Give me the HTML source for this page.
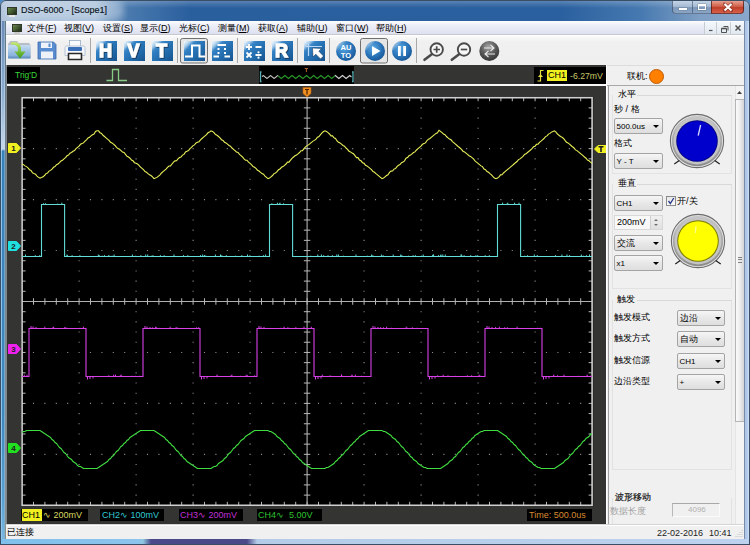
<!DOCTYPE html>
<html><head><meta charset="utf-8">
<style>
*{margin:0;padding:0;box-sizing:border-box}
html,body{width:750px;height:545px;overflow:hidden}
body{position:relative;font-family:"Liberation Sans",sans-serif;font-size:9px;color:#000;background:#4a8ac8}
.abs{position:absolute}
.t{position:absolute;white-space:nowrap;line-height:1}
u{text-decoration-thickness:1px;text-underline-offset:1px}
.combo{position:absolute;border:1px solid #a4a4a4;border-radius:2px;background:linear-gradient(#f6f6f6,#e8e8e8 50%,#dedede);}
.combo .arr{position:absolute;right:3px;top:50%;margin-top:-1.5px;width:0;height:0;border-left:3px solid transparent;border-right:3px solid transparent;border-top:3.5px solid #000}
.combo .v{position:absolute;left:1.5px;top:3px;white-space:nowrap;line-height:1}
.ibtn{position:absolute;border-radius:2px;background:linear-gradient(135deg,#7fb8e8 0%,#2c6fb0 45%,#1b5a98 100%)}
.ibtn b{position:absolute;left:0;right:0;top:1px;text-align:center;color:#fff;font:bold 17px/19px "Liberation Sans",sans-serif;text-shadow:1px 1px 1px #0a2a50}
.sep{position:absolute;top:38px;width:1px;height:25px;background:#a8a8a8}
.cbox{position:absolute;top:509px;height:12px;background:#000}
</style></head>
<body>
<!-- window frame / title bar -->
<div class="abs" style="left:0;top:0;width:750px;height:21px;background:linear-gradient(90deg,#b0c4da 0px,#a4bcd6 95px,#4a7aae 128px,#2a5f9e 190px,#2a609f 560px,#4679b0 640px,#7f9fc4 700px,#8aa8cc 750px);border-radius:6px 6px 0 0"></div>
<div class="abs" style="left:0;top:0;width:750px;height:8px;background:linear-gradient(rgba(255,255,255,.25),rgba(255,255,255,0));border-radius:6px 6px 0 0"></div>
<div class="abs" style="left:0;top:0;width:750px;height:545px;border:1px solid #3a4f66;border-radius:6px 6px 0 0;pointer-events:none;z-index:50"></div>
<!-- left frame -->
<div class="abs" style="left:0px;top:21px;width:1px;height:524px;background:linear-gradient(#2a3c52,#24506e 150px,#24506e)"></div>
<div class="abs" style="left:1px;top:21px;width:1px;height:524px;background:linear-gradient(#a8c0dc,#c0d8f0 128px,#d0e8f8 129px,#8cc4e8 130px,#90c8ec)"></div>
<div class="abs" style="left:2px;top:21px;width:2px;height:518px;background:linear-gradient(#6a8ab8,#8aaed0 70px,#c8d8ea 128px,#3a80b8 130px,#4088c0 400px,#5aa0d4 480px,#7ab8e0 518px)"></div>
<div class="abs" style="left:4px;top:21px;width:1px;height:518px;background:linear-gradient(#8aa4c0,#b0c8e0 70px,#c8d8ea 128px,#6aa0c8 130px,#80b0d0)"></div>
<div class="abs" style="left:5px;top:21px;width:1px;height:518px;background:linear-gradient(#607888,#8a9090)"></div>
<div class="abs" style="left:744px;top:21px;width:1px;height:518px;background:#7a8aa8"></div>
<div class="abs" style="left:745px;top:21px;width:4px;height:518px;background:linear-gradient(90deg,#aac4e6,#b4ccec 60%,#d0e4f8)"></div>
<div class="abs" style="left:749px;top:21px;width:1px;height:524px;background:#304060"></div>
<div class="abs" style="left:1px;top:539px;width:748px;height:5px;background:linear-gradient(90deg,#7fc0ec,#8cc4ec 138px,#90c8e0 142px,#4a4a8a 150px,#4a4a88 246px,#b4cce8 256px,#bcd2ee 750px)"></div><div class="abs" style="left:0;top:544px;width:750px;height:1px;background:#304060"></div>
<!-- title icon and text -->
<div class="abs" style="left:4px;top:2px;width:120px;height:17px;border-radius:8px;background:rgba(225,235,245,.35);filter:blur(3px)"></div>
<div class="abs" style="left:7px;top:7px;width:10px;height:8px;background:linear-gradient(135deg,#6a8a4a,#1e2a18);border:1px solid #30382a"></div>
<div class="abs" style="left:9px;top:15px;width:6px;height:2px;background:#e8e8e8"></div>
<div class="t" style="left:21px;top:6px;font-size:9px;color:#0c1420;-webkit-text-stroke:.15px #0c1420">DSO-6000 - [Scope1]</div>
<!-- caption buttons -->
<div class="abs" style="left:672px;top:1px;width:40px;height:13px;border:1px solid rgba(40,60,90,.6);border-top:none;border-radius:0 0 0 4px;background:linear-gradient(#c4d4e6,#a2b8d2 50%,#7d97b8 55%,#8aa6c6)"></div>
<div class="abs" style="left:692px;top:1px;width:1px;height:12px;background:rgba(40,60,90,.5)"></div>
<div class="abs" style="left:679px;top:8px;width:8px;height:2px;background:#fff;box-shadow:0 0 1px #333"></div>
<div class="abs" style="left:698px;top:4px;width:8px;height:6px;border:1px solid #fff;border-top-width:2px;box-shadow:0 0 1px #333"></div>
<div class="abs" style="left:711px;top:1px;width:33px;height:13px;border:1px solid rgba(70,20,20,.7);border-top:none;border-radius:0 0 4px 0;background:linear-gradient(#e8a090,#d0604a 45%,#c0402a 55%,#d8604a)"></div>
<svg class="abs" style="left:711px;top:0" width="34" height="15"><path d="M13.5 4L20.5 10.5M20.5 4L13.5 10.5" stroke="#5a1810" stroke-width="3.2" stroke-linecap="round" opacity=".5"/><path d="M13.5 4L20.5 10.5M20.5 4L13.5 10.5" stroke="#fff" stroke-width="2.1"/></svg>
<!-- menu bar -->
<div class="abs" style="left:6px;top:21px;width:738px;height:14px;background:linear-gradient(#fdfdff 0,#eef0f8 30%,#dde0f0 100%);border-bottom:1px solid #c6c8cc"></div>
<div class="abs" style="left:12px;top:24px;width:10px;height:8px;background:linear-gradient(135deg,#6a8a4a,#1e2a18);border:1px solid #30382a"></div>
<div class="abs" style="left:14px;top:32px;width:6px;height:2px;background:#c8c8c8"></div>
<div class="t" style="left:27px;top:24px">文件(<u>F</u>)</div>
<div class="t" style="left:64px;top:24px">视图(<u>V</u>)</div>
<div class="t" style="left:103px;top:24px">设置(<u>S</u>)</div>
<div class="t" style="left:140px;top:24px">显示(<u>D</u>)</div>
<div class="t" style="left:179px;top:24px">光标(<u>C</u>)</div>
<div class="t" style="left:218px;top:24px">测量(<u>M</u>)</div>
<div class="t" style="left:258px;top:24px">获取(<u>A</u>)</div>
<div class="t" style="left:297px;top:24px">辅助(<u>U</u>)</div>
<div class="t" style="left:336px;top:24px">窗口(<u>W</u>)</div>
<div class="t" style="left:376px;top:24px">帮助(<u>H</u>)</div>
<!-- MDI buttons -->
<div class="abs" style="left:704px;top:22px;width:12px;height:12px;background:linear-gradient(#f4f8fc,#e0e8f0);border-left:1px solid #c8ccd0"></div>
<div class="abs" style="left:716px;top:22px;width:14px;height:12px;background:linear-gradient(#f4f8fc,#e0e8f0);border-left:1px solid #c8ccd0"></div>
<div class="abs" style="left:730px;top:22px;width:14px;height:12px;background:linear-gradient(#f4f8fc,#e0e8f0);border-left:1px solid #c8ccd0"></div>
<svg class="abs" style="left:704px;top:22px" width="40" height="13"><path d="M5 8.5H8.5" stroke="#505050" stroke-width="1.2"/><path d="M17.5 6.5h5v4h-5z" fill="none" stroke="#505050" stroke-width="1"/><path d="M17.5 6.5h5" stroke="#505050" stroke-width="1.6"/><path d="M19.5 4.5h4.5v4" fill="none" stroke="#505050" stroke-width="1"/><path d="M31.5 3.5L36.5 8.5M36.5 3.5L31.5 8.5" stroke="#505050" stroke-width="1.5"/></svg>
<!-- toolbar -->
<div class="abs" style="left:6px;top:35px;width:738px;height:30px;background:linear-gradient(#fafafa,#f0f0f0 20%,#efefef);border-top:1px solid #fff"></div>
<div class="sep" style="left:90px"></div><div class="sep" style="left:177px"></div><div class="sep" style="left:237px"></div><div class="sep" style="left:297px"></div><div class="sep" style="left:329px"></div><div class="sep" style="left:416px"></div><svg class="abs" style="left:0;top:0;z-index:2" width="520" height="66" viewBox="0 0 520 66">
<defs>
<linearGradient id="gb" x1="0" y1="0" x2="1" y2="1"><stop offset="0" stop-color="#6aaee6"/><stop offset=".35" stop-color="#2f7dc0"/><stop offset=".7" stop-color="#2068a8"/><stop offset="1" stop-color="#16538e"/></linearGradient>
<linearGradient id="gh" x1="0" y1="0" x2=".6" y2=".6"><stop offset="0" stop-color="#fff" stop-opacity=".95"/><stop offset=".28" stop-color="#fff" stop-opacity=".5"/><stop offset=".45" stop-color="#fff" stop-opacity="0"/></linearGradient>
<radialGradient id="gc" cx=".4" cy=".35" r=".7"><stop offset="0" stop-color="#5aa8e4"/><stop offset=".6" stop-color="#2a74b8"/><stop offset="1" stop-color="#165494"/></radialGradient>
<linearGradient id="gch" x1="0" y1="0" x2=".7" y2=".7"><stop offset="0" stop-color="#fff" stop-opacity=".9"/><stop offset=".3" stop-color="#fff" stop-opacity=".3"/><stop offset=".42" stop-color="#fff" stop-opacity="0"/></linearGradient>
<linearGradient id="gf" x1="0" y1="0" x2="0" y2="1"><stop offset="0" stop-color="#c4dcf2"/><stop offset="1" stop-color="#78a6d6"/></linearGradient>
<linearGradient id="ga" x1="0" y1="0" x2="0" y2="1"><stop offset="0" stop-color="#c8ec70"/><stop offset="1" stop-color="#3a9a18"/></linearGradient>
<radialGradient id="gs" cx=".45" cy=".3" r=".75"><stop offset="0" stop-color="#a8a8a8"/><stop offset=".5" stop-color="#5a5a5a"/><stop offset="1" stop-color="#303030"/></radialGradient>
<filter id="sh" x="-20%" y="-20%" width="150%" height="150%"><feDropShadow dx="0.8" dy="0.8" stdDeviation="0.6" flood-color="#082040" flood-opacity=".9"/></filter>
</defs>
<path d="M8 44L10.5 41H17L18.5 43H29L30.5 45V58H8Z" fill="#b8bcc4"/>
<rect x="8" y="45" width="22.5" height="13.5" rx="1" fill="url(#gf)"/>
<rect x="8" y="56.5" width="22.5" height="2" fill="#5a86b8" opacity=".6"/>
<path d="M11 42.5C16.5 41.5 20.5 43 21 48V51.5H25.5L20 58.5L14.5 51.5H18V48.5C18 46 15 44.5 11 44.5Z" fill="url(#ga)"/>
<path d="M38 42H53.5L56 44.5V59H38Z" fill="#5a8cd0"/>
<path d="M38 42H53.5L56 44.5V59H38Z" fill="none" stroke="#3a6aaa" stroke-width=".8"/>
<rect x="41" y="42.5" width="11" height="5.5" fill="#f0f4fa"/>
<rect x="48.5" y="43.5" width="2" height="3.5" fill="#5a8cd0"/>
<rect x="41" y="51.5" width="12" height="7" fill="#eef2f8"/>
<rect x="69.5" y="40.5" width="11" height="6" fill="#f8fafc" stroke="#9aaec4" stroke-width=".8"/>
<path d="M65 47.5C65 46.5 66 46 67 46H83C84 46 85 46.5 85 47.5V55.5H65Z" fill="#f4f6fa" stroke="#a8b8cc" stroke-width=".8"/>
<rect x="68" y="47" width="14" height="4" rx="1" fill="#3a70b8"/>
<path d="M68 53H82V60H68Z" fill="#fafafa"/>
<path d="M68 53.5H82M68.5 53V59.5H81.5V53" fill="none" stroke="#282828" stroke-width="1.6"/>
<rect x="96" y="41" width="21" height="20" fill="url(#gb)"/><rect x="96" y="41" width="21" height="20" fill="url(#gh)"/><text x="105.5" y="57" text-anchor="middle" font-family="Liberation Sans" font-weight="bold" font-size="18" fill="#fff" stroke="#fff" stroke-width="1.3" filter="url(#sh)">H</text>
<rect x="124" y="41" width="21" height="20" fill="url(#gb)"/><rect x="124" y="41" width="21" height="20" fill="url(#gh)"/><text x="133.5" y="57" text-anchor="middle" font-family="Liberation Sans" font-weight="bold" font-size="18" fill="#fff" stroke="#fff" stroke-width="1.3" filter="url(#sh)">V</text>
<rect x="152" y="41" width="21" height="20" fill="url(#gb)"/><rect x="152" y="41" width="21" height="20" fill="url(#gh)"/><text x="161.5" y="57" text-anchor="middle" font-family="Liberation Sans" font-weight="bold" font-size="18" fill="#fff" stroke="#fff" stroke-width="1.3" filter="url(#sh)">T</text>
<rect x="272" y="41" width="21" height="20" fill="url(#gb)"/><rect x="272" y="41" width="21" height="20" fill="url(#gh)"/><text x="281.5" y="57" text-anchor="middle" font-family="Liberation Sans" font-weight="bold" font-size="18" fill="#fff" stroke="#fff" stroke-width="1.3" filter="url(#sh)">R</text>
<rect x="184" y="41" width="21" height="20" fill="url(#gb)"/><rect x="184" y="41" width="21" height="20" fill="url(#gh)"/><path d="M185 56.5H192V45.5H199.5V56.5H205" fill="none" stroke="#fff" stroke-width="2" filter="url(#sh)"/>
<rect x="212" y="41" width="21" height="20" fill="url(#gb)"/><rect x="212" y="41" width="21" height="20" fill="url(#gh)"/><path d="M213.5 56.5H219M217.5 45H226M224.5 56.5H230" fill="none" stroke="#fff" stroke-width="2"/><path d="M218.5 48V55M225 48V55" fill="none" stroke="#fff" stroke-width="2" stroke-dasharray="2 2"/>
<rect x="244" y="41" width="21" height="20" fill="url(#gb)"/><rect x="244" y="41" width="21" height="20" fill="url(#gh)"/><path d="M246 47H252M249 44V50M255.5 47H261.5M246.5 52.5L251.5 57.5M251.5 52.5L246.5 57.5M255.5 55H261.5" fill="none" stroke="#fff" stroke-width="1.8"/><circle cx="258.5" cy="52.3" r="1.1" fill="#fff"/><circle cx="258.5" cy="57.7" r="1.1" fill="#fff"/>
<rect x="304" y="41" width="21" height="20" fill="url(#gb)"/><rect x="304" y="41" width="21" height="20" fill="url(#gh)"/><path d="M308.5 43.5V56M306 46.5H322" fill="none" stroke="#bcd8f4" stroke-width="1.2"/><path d="M312.5 48L321.5 48.5L318.8 51.2L323.5 56L320.5 59L315.8 54.2L313 57Z" fill="#fff" stroke="#0a2a50" stroke-width=".5"/>
<circle cx="346" cy="51" r="10" fill="url(#gc)"/><circle cx="346" cy="51" r="10" fill="url(#gch)"/><text x="346" y="49.5" text-anchor="middle" font-family="Liberation Sans" font-weight="bold" font-size="7.5" fill="#fff">AU</text><text x="346" y="57.5" text-anchor="middle" font-family="Liberation Sans" font-weight="bold" font-size="7.5" fill="#fff">TO</text>
<rect x="360.5" y="38.5" width="27" height="24.5" rx="2" fill="#e6e6e6" stroke="#707070" stroke-width="1"/>
<rect x="180.5" y="38.5" width="27" height="24.5" rx="2" fill="#e6e6e6" stroke="#707070" stroke-width="1"/>
<rect x="184" y="41" width="21" height="20" fill="url(#gb)"/><rect x="184" y="41" width="21" height="20" fill="url(#gh)"/><path d="M185 56.5H192V45.5H199.5V56.5H205" fill="none" stroke="#fff" stroke-width="2"/>
<circle cx="375" cy="51" r="10" fill="url(#gc)"/><circle cx="375" cy="51" r="10" fill="url(#gch)"/><path d="M372 46L380.5 51L372 56Z" fill="#fff"/>
<circle cx="402" cy="51" r="10" fill="url(#gc)"/><circle cx="402" cy="51" r="10" fill="url(#gch)"/><rect x="398" y="46" width="2.8" height="10" fill="#fff"/><rect x="403.2" y="46" width="2.8" height="10" fill="#fff"/>
<circle cx="436.7" cy="49.5" r="6.2" fill="#f6f6f6" stroke="#4a4a4a" stroke-width="1.9"/>
<path d="M431.8 54.2L424.5 59.8" stroke="#4a4a4a" stroke-width="2.6" stroke-linecap="round"/>
<path d="M433.5 49.5H440M436.7 46.3V52.7" stroke="#4a4a4a" stroke-width="1.7"/>
<circle cx="464" cy="49.5" r="6.2" fill="#f6f6f6" stroke="#4a4a4a" stroke-width="1.9"/>
<path d="M459.1 54.2L451.8 59.8" stroke="#4a4a4a" stroke-width="2.6" stroke-linecap="round"/>
<path d="M460.8 49.5H467.2" stroke="#4a4a4a" stroke-width="1.7"/>
<circle cx="489.3" cy="51" r="10" fill="url(#gs)"/>
<path d="M484 48H493.5M490.5 45L494 48L490.5 51M495 54H485.5M488.5 51L485 54L488.5 57" fill="none" stroke="#e8e8e8" stroke-width="1.1"/>
</svg>
<!-- scope area -->
<div class="abs" style="left:6px;top:65px;width:600px;height:459px;background:#343432"></div>
<div class="abs" style="left:7px;top:84px;width:599px;height:2px;background:#f6f6f6"></div>
<div class="abs" style="left:6px;top:65px;width:1px;height:459px;background:#80868c"></div>
<div class="abs" style="left:7px;top:67px;width:33px;height:16px;background:#000"></div>
<div class="t" style="left:15px;top:71px;color:#38d838;font-size:8.5px">Trig'D</div>
<svg class="abs" style="left:100px;top:64px" width="40" height="22"><path d="M6.5 16.5H12.5V5.5H18.5V16.5H27" fill="none" stroke="#88cc88" stroke-width="1.3"/></svg>
<div class="abs" style="left:259px;top:66px;width:95px;height:18px;background:#000"></div>
<svg class="abs" style="left:258px;top:64px" width="100" height="22"><path d="M4.00 12.58 L4.30 12.33 L4.60 12.08 L4.90 11.83 L5.20 11.58 L5.50 11.67 L5.80 11.92 L6.10 12.17 L6.40 12.42 L6.70 12.67 L7.00 12.92 L7.30 13.17 L7.60 13.42 L7.90 13.67 L8.20 13.92 L8.50 14.17 L8.80 14.42 L9.10 14.33 L9.40 14.08 L9.70 13.83 L10.00 13.58 L10.30 13.33 L10.60 13.08 L10.90 12.83 L11.20 12.58 L11.50 12.33 L11.80 12.08 L12.10 11.83 L12.40 11.58 L12.70 11.67 L13.00 11.92 L13.30 12.17 L13.60 12.42 L13.90 12.67 L14.20 12.92 L14.50 13.17 L14.80 13.42 L15.10 13.67 L15.40 13.92 L15.70 14.17 L16.00 14.42 L16.30 14.33 L16.60 14.08 L16.90 13.83 L17.20 13.58 L17.50 13.33 L17.80 13.08 L18.10 12.83 L18.40 12.58 L18.70 12.33 L19.00 12.08 L19.30 11.83 L19.60 11.58 L19.90 11.67" fill="none" stroke="#d0d0d0" stroke-width="1.1"/><path d="M20.00 11.75 L20.30 12.00 L20.60 12.25 L20.90 12.50 L21.20 12.75 L21.50 13.00 L21.80 13.25 L22.10 13.50 L22.40 13.75 L22.70 14.00 L23.00 14.25 L23.30 14.50 L23.60 14.25 L23.90 14.00 L24.20 13.75 L24.50 13.50 L24.80 13.25 L25.10 13.00 L25.40 12.75 L25.70 12.50 L26.00 12.25 L26.30 12.00 L26.60 11.75 L26.90 11.50 L27.20 11.75 L27.50 12.00 L27.80 12.25 L28.10 12.50 L28.40 12.75 L28.70 13.00 L29.00 13.25 L29.30 13.50 L29.60 13.75 L29.90 14.00 L30.20 14.25 L30.50 14.50 L30.80 14.25 L31.10 14.00 L31.40 13.75 L31.70 13.50 L32.00 13.25 L32.30 13.00 L32.60 12.75 L32.90 12.50 L33.20 12.25 L33.50 12.00 L33.80 11.75 L34.10 11.50 L34.40 11.75 L34.70 12.00 L35.00 12.25 L35.30 12.50 L35.60 12.75 L35.90 13.00 L36.20 13.25 L36.50 13.50 L36.80 13.75 L37.10 14.00 L37.40 14.25 L37.70 14.50 L38.00 14.25 L38.30 14.00 L38.60 13.75 L38.90 13.50 L39.20 13.25 L39.50 13.00 L39.80 12.75 L40.10 12.50 L40.40 12.25 L40.70 12.00 L41.00 11.75 L41.30 11.50 L41.60 11.75 L41.90 12.00 L42.20 12.25 L42.50 12.50 L42.80 12.75 L43.10 13.00 L43.40 13.25 L43.70 13.50 L44.00 13.75 L44.30 14.00 L44.60 14.25 L44.90 14.50 L45.20 14.25 L45.50 14.00 L45.80 13.75 L46.10 13.50 L46.40 13.25 L46.70 13.00 L47.00 12.75 L47.30 12.50 L47.60 12.25 L47.90 12.00 L48.20 11.75 L48.50 11.50 L48.80 11.75 L49.10 12.00 L49.40 12.25 L49.70 12.50 L50.00 12.75 L50.30 13.00 L50.60 13.25 L50.90 13.50 L51.20 13.75 L51.50 14.00 L51.80 14.25 L52.10 14.50 L52.40 14.25 L52.70 14.00 L53.00 13.75 L53.30 13.50 L53.60 13.25 L53.90 13.00 L54.20 12.75 L54.50 12.50 L54.80 12.25 L55.10 12.00 L55.40 11.75 L55.70 11.50 L56.00 11.75 L56.30 12.00 L56.60 12.25 L56.90 12.50 L57.20 12.75 L57.50 13.00 L57.80 13.25 L58.10 13.50 L58.40 13.75 L58.70 14.00 L59.00 14.25 L59.30 14.50 L59.60 14.25 L59.90 14.00 L60.20 13.75 L60.50 13.50 L60.80 13.25 L61.10 13.00 L61.40 12.75 L61.70 12.50 L62.00 12.25 L62.30 12.00 L62.60 11.75 L62.90 11.50 L63.20 11.75 L63.50 12.00 L63.80 12.25 L64.10 12.50 L64.40 12.75 L64.70 13.00 L65.00 13.25 L65.30 13.50 L65.60 13.75 L65.90 14.00 L66.20 14.25 L66.50 14.50 L66.80 14.25 L67.10 14.00 L67.40 13.75 L67.70 13.50 L68.00 13.25 L68.30 13.00 L68.60 12.75 L68.90 12.50 L69.20 12.25 L69.50 12.00 L69.80 11.75 L70.10 11.50 L70.40 11.75 L70.70 12.00 L71.00 12.25 L71.30 12.50 L71.60 12.75 L71.90 13.00 L72.20 13.25 L72.50 13.50 L72.80 13.75 L73.10 14.00 L73.40 14.25 L73.70 14.50 L74.00 14.25 L74.30 14.00 L74.60 13.75 L74.90 13.50 L75.20 13.25 L75.50 13.00 L75.80 12.75 L76.10 12.50 L76.40 12.25 L76.70 12.00 L77.00 11.75" fill="none" stroke="#2a962a" stroke-width="1.1"/><path d="M77.00 11.75 L77.30 11.50 L77.60 11.75 L77.90 12.00 L78.20 12.25 L78.50 12.50 L78.80 12.75 L79.10 13.00 L79.40 13.25 L79.70 13.50 L80.00 13.75 L80.30 14.00 L80.60 14.25 L80.90 14.50 L81.20 14.25 L81.50 14.00 L81.80 13.75 L82.10 13.50 L82.40 13.25 L82.70 13.00 L83.00 12.75 L83.30 12.50 L83.60 12.25 L83.90 12.00 L84.20 11.75 L84.50 11.50 L84.80 11.75 L85.10 12.00 L85.40 12.25 L85.70 12.50 L86.00 12.75 L86.30 13.00 L86.60 13.25 L86.90 13.50 L87.20 13.75 L87.50 14.00 L87.80 14.25 L88.10 14.50 L88.40 14.25 L88.70 14.00 L89.00 13.75 L89.30 13.50 L89.60 13.25 L89.90 13.00 L90.20 12.75 L90.50 12.50 L90.80 12.25 L91.10 12.00 L91.40 11.75 L91.70 11.50 L92.00 11.75 L92.30 12.00 L92.60 12.25 L92.90 12.50 L93.20 12.75 L93.50 13.00" fill="none" stroke="#d0d0d0" stroke-width="1.1"/><path d="M3.5 8H2.5V17.5H3.5M94 8H95V17.5H94" fill="none" stroke="#58b0b4" stroke-width="1.3"/><path d="M46.8 4.5H50M48.4 4.5V8" stroke="#b06830" stroke-width="1"/></svg>
<div class="abs" style="left:534px;top:67px;width:72px;height:17px;background:#000"></div>
<svg class="abs" style="left:534px;top:64px" width="12" height="22"><path d="M3.5 17H6.5V6.5H9.5" fill="none" stroke="#e8e040" stroke-width="1.2"/><path d="M4 13L6.5 10L9 13Z" fill="#e8e040"/></svg>
<div class="abs" style="left:547px;top:70px;width:20px;height:11px;background:#f0f020"></div>
<div class="t" style="left:548px;top:71px;font-size:9px;color:#000">CH1</div>
<div class="t" style="left:570px;top:71.5px;font-size:8.7px;color:#c8c868">-6.27mV</div>
<svg class="abs" style="left:0;top:0" width="750" height="545" viewBox="0 0 750 545">
<rect x="21.2" y="96.8" width="572" height="409.5" fill="#000"/>
<path d="M78.55 107.34h1.1v1.1h-1.1zM78.55 117.53h1.1v1.1h-1.1zM78.55 127.72h1.1v1.1h-1.1zM78.55 137.91h1.1v1.1h-1.1zM78.55 148.10h1.1v1.1h-1.1zM78.55 158.29h1.1v1.1h-1.1zM78.55 168.48h1.1v1.1h-1.1zM78.55 178.67h1.1v1.1h-1.1zM78.55 188.86h1.1v1.1h-1.1zM78.55 199.05h1.1v1.1h-1.1zM78.55 209.24h1.1v1.1h-1.1zM78.55 219.43h1.1v1.1h-1.1zM78.55 229.62h1.1v1.1h-1.1zM78.55 239.81h1.1v1.1h-1.1zM78.55 250.00h1.1v1.1h-1.1zM78.55 260.19h1.1v1.1h-1.1zM78.55 270.38h1.1v1.1h-1.1zM78.55 280.57h1.1v1.1h-1.1zM78.55 290.76h1.1v1.1h-1.1zM78.55 300.95h1.1v1.1h-1.1zM78.55 311.14h1.1v1.1h-1.1zM78.55 321.33h1.1v1.1h-1.1zM78.55 331.52h1.1v1.1h-1.1zM78.55 341.71h1.1v1.1h-1.1zM78.55 351.90h1.1v1.1h-1.1zM78.55 362.09h1.1v1.1h-1.1zM78.55 372.28h1.1v1.1h-1.1zM78.55 382.47h1.1v1.1h-1.1zM78.55 392.66h1.1v1.1h-1.1zM78.55 402.85h1.1v1.1h-1.1zM78.55 413.04h1.1v1.1h-1.1zM78.55 423.23h1.1v1.1h-1.1zM78.55 433.42h1.1v1.1h-1.1zM78.55 443.61h1.1v1.1h-1.1zM78.55 453.80h1.1v1.1h-1.1zM78.55 463.99h1.1v1.1h-1.1zM78.55 474.18h1.1v1.1h-1.1zM78.55 484.37h1.1v1.1h-1.1zM78.55 494.56h1.1v1.1h-1.1zM135.55 107.34h1.1v1.1h-1.1zM135.55 117.53h1.1v1.1h-1.1zM135.55 127.72h1.1v1.1h-1.1zM135.55 137.91h1.1v1.1h-1.1zM135.55 148.10h1.1v1.1h-1.1zM135.55 158.29h1.1v1.1h-1.1zM135.55 168.48h1.1v1.1h-1.1zM135.55 178.67h1.1v1.1h-1.1zM135.55 188.86h1.1v1.1h-1.1zM135.55 199.05h1.1v1.1h-1.1zM135.55 209.24h1.1v1.1h-1.1zM135.55 219.43h1.1v1.1h-1.1zM135.55 229.62h1.1v1.1h-1.1zM135.55 239.81h1.1v1.1h-1.1zM135.55 250.00h1.1v1.1h-1.1zM135.55 260.19h1.1v1.1h-1.1zM135.55 270.38h1.1v1.1h-1.1zM135.55 280.57h1.1v1.1h-1.1zM135.55 290.76h1.1v1.1h-1.1zM135.55 300.95h1.1v1.1h-1.1zM135.55 311.14h1.1v1.1h-1.1zM135.55 321.33h1.1v1.1h-1.1zM135.55 331.52h1.1v1.1h-1.1zM135.55 341.71h1.1v1.1h-1.1zM135.55 351.90h1.1v1.1h-1.1zM135.55 362.09h1.1v1.1h-1.1zM135.55 372.28h1.1v1.1h-1.1zM135.55 382.47h1.1v1.1h-1.1zM135.55 392.66h1.1v1.1h-1.1zM135.55 402.85h1.1v1.1h-1.1zM135.55 413.04h1.1v1.1h-1.1zM135.55 423.23h1.1v1.1h-1.1zM135.55 433.42h1.1v1.1h-1.1zM135.55 443.61h1.1v1.1h-1.1zM135.55 453.80h1.1v1.1h-1.1zM135.55 463.99h1.1v1.1h-1.1zM135.55 474.18h1.1v1.1h-1.1zM135.55 484.37h1.1v1.1h-1.1zM135.55 494.56h1.1v1.1h-1.1zM192.55 107.34h1.1v1.1h-1.1zM192.55 117.53h1.1v1.1h-1.1zM192.55 127.72h1.1v1.1h-1.1zM192.55 137.91h1.1v1.1h-1.1zM192.55 148.10h1.1v1.1h-1.1zM192.55 158.29h1.1v1.1h-1.1zM192.55 168.48h1.1v1.1h-1.1zM192.55 178.67h1.1v1.1h-1.1zM192.55 188.86h1.1v1.1h-1.1zM192.55 199.05h1.1v1.1h-1.1zM192.55 209.24h1.1v1.1h-1.1zM192.55 219.43h1.1v1.1h-1.1zM192.55 229.62h1.1v1.1h-1.1zM192.55 239.81h1.1v1.1h-1.1zM192.55 250.00h1.1v1.1h-1.1zM192.55 260.19h1.1v1.1h-1.1zM192.55 270.38h1.1v1.1h-1.1zM192.55 280.57h1.1v1.1h-1.1zM192.55 290.76h1.1v1.1h-1.1zM192.55 300.95h1.1v1.1h-1.1zM192.55 311.14h1.1v1.1h-1.1zM192.55 321.33h1.1v1.1h-1.1zM192.55 331.52h1.1v1.1h-1.1zM192.55 341.71h1.1v1.1h-1.1zM192.55 351.90h1.1v1.1h-1.1zM192.55 362.09h1.1v1.1h-1.1zM192.55 372.28h1.1v1.1h-1.1zM192.55 382.47h1.1v1.1h-1.1zM192.55 392.66h1.1v1.1h-1.1zM192.55 402.85h1.1v1.1h-1.1zM192.55 413.04h1.1v1.1h-1.1zM192.55 423.23h1.1v1.1h-1.1zM192.55 433.42h1.1v1.1h-1.1zM192.55 443.61h1.1v1.1h-1.1zM192.55 453.80h1.1v1.1h-1.1zM192.55 463.99h1.1v1.1h-1.1zM192.55 474.18h1.1v1.1h-1.1zM192.55 484.37h1.1v1.1h-1.1zM192.55 494.56h1.1v1.1h-1.1zM249.55 107.34h1.1v1.1h-1.1zM249.55 117.53h1.1v1.1h-1.1zM249.55 127.72h1.1v1.1h-1.1zM249.55 137.91h1.1v1.1h-1.1zM249.55 148.10h1.1v1.1h-1.1zM249.55 158.29h1.1v1.1h-1.1zM249.55 168.48h1.1v1.1h-1.1zM249.55 178.67h1.1v1.1h-1.1zM249.55 188.86h1.1v1.1h-1.1zM249.55 199.05h1.1v1.1h-1.1zM249.55 209.24h1.1v1.1h-1.1zM249.55 219.43h1.1v1.1h-1.1zM249.55 229.62h1.1v1.1h-1.1zM249.55 239.81h1.1v1.1h-1.1zM249.55 250.00h1.1v1.1h-1.1zM249.55 260.19h1.1v1.1h-1.1zM249.55 270.38h1.1v1.1h-1.1zM249.55 280.57h1.1v1.1h-1.1zM249.55 290.76h1.1v1.1h-1.1zM249.55 300.95h1.1v1.1h-1.1zM249.55 311.14h1.1v1.1h-1.1zM249.55 321.33h1.1v1.1h-1.1zM249.55 331.52h1.1v1.1h-1.1zM249.55 341.71h1.1v1.1h-1.1zM249.55 351.90h1.1v1.1h-1.1zM249.55 362.09h1.1v1.1h-1.1zM249.55 372.28h1.1v1.1h-1.1zM249.55 382.47h1.1v1.1h-1.1zM249.55 392.66h1.1v1.1h-1.1zM249.55 402.85h1.1v1.1h-1.1zM249.55 413.04h1.1v1.1h-1.1zM249.55 423.23h1.1v1.1h-1.1zM249.55 433.42h1.1v1.1h-1.1zM249.55 443.61h1.1v1.1h-1.1zM249.55 453.80h1.1v1.1h-1.1zM249.55 463.99h1.1v1.1h-1.1zM249.55 474.18h1.1v1.1h-1.1zM249.55 484.37h1.1v1.1h-1.1zM249.55 494.56h1.1v1.1h-1.1zM363.55 107.34h1.1v1.1h-1.1zM363.55 117.53h1.1v1.1h-1.1zM363.55 127.72h1.1v1.1h-1.1zM363.55 137.91h1.1v1.1h-1.1zM363.55 148.10h1.1v1.1h-1.1zM363.55 158.29h1.1v1.1h-1.1zM363.55 168.48h1.1v1.1h-1.1zM363.55 178.67h1.1v1.1h-1.1zM363.55 188.86h1.1v1.1h-1.1zM363.55 199.05h1.1v1.1h-1.1zM363.55 209.24h1.1v1.1h-1.1zM363.55 219.43h1.1v1.1h-1.1zM363.55 229.62h1.1v1.1h-1.1zM363.55 239.81h1.1v1.1h-1.1zM363.55 250.00h1.1v1.1h-1.1zM363.55 260.19h1.1v1.1h-1.1zM363.55 270.38h1.1v1.1h-1.1zM363.55 280.57h1.1v1.1h-1.1zM363.55 290.76h1.1v1.1h-1.1zM363.55 300.95h1.1v1.1h-1.1zM363.55 311.14h1.1v1.1h-1.1zM363.55 321.33h1.1v1.1h-1.1zM363.55 331.52h1.1v1.1h-1.1zM363.55 341.71h1.1v1.1h-1.1zM363.55 351.90h1.1v1.1h-1.1zM363.55 362.09h1.1v1.1h-1.1zM363.55 372.28h1.1v1.1h-1.1zM363.55 382.47h1.1v1.1h-1.1zM363.55 392.66h1.1v1.1h-1.1zM363.55 402.85h1.1v1.1h-1.1zM363.55 413.04h1.1v1.1h-1.1zM363.55 423.23h1.1v1.1h-1.1zM363.55 433.42h1.1v1.1h-1.1zM363.55 443.61h1.1v1.1h-1.1zM363.55 453.80h1.1v1.1h-1.1zM363.55 463.99h1.1v1.1h-1.1zM363.55 474.18h1.1v1.1h-1.1zM363.55 484.37h1.1v1.1h-1.1zM363.55 494.56h1.1v1.1h-1.1zM420.55 107.34h1.1v1.1h-1.1zM420.55 117.53h1.1v1.1h-1.1zM420.55 127.72h1.1v1.1h-1.1zM420.55 137.91h1.1v1.1h-1.1zM420.55 148.10h1.1v1.1h-1.1zM420.55 158.29h1.1v1.1h-1.1zM420.55 168.48h1.1v1.1h-1.1zM420.55 178.67h1.1v1.1h-1.1zM420.55 188.86h1.1v1.1h-1.1zM420.55 199.05h1.1v1.1h-1.1zM420.55 209.24h1.1v1.1h-1.1zM420.55 219.43h1.1v1.1h-1.1zM420.55 229.62h1.1v1.1h-1.1zM420.55 239.81h1.1v1.1h-1.1zM420.55 250.00h1.1v1.1h-1.1zM420.55 260.19h1.1v1.1h-1.1zM420.55 270.38h1.1v1.1h-1.1zM420.55 280.57h1.1v1.1h-1.1zM420.55 290.76h1.1v1.1h-1.1zM420.55 300.95h1.1v1.1h-1.1zM420.55 311.14h1.1v1.1h-1.1zM420.55 321.33h1.1v1.1h-1.1zM420.55 331.52h1.1v1.1h-1.1zM420.55 341.71h1.1v1.1h-1.1zM420.55 351.90h1.1v1.1h-1.1zM420.55 362.09h1.1v1.1h-1.1zM420.55 372.28h1.1v1.1h-1.1zM420.55 382.47h1.1v1.1h-1.1zM420.55 392.66h1.1v1.1h-1.1zM420.55 402.85h1.1v1.1h-1.1zM420.55 413.04h1.1v1.1h-1.1zM420.55 423.23h1.1v1.1h-1.1zM420.55 433.42h1.1v1.1h-1.1zM420.55 443.61h1.1v1.1h-1.1zM420.55 453.80h1.1v1.1h-1.1zM420.55 463.99h1.1v1.1h-1.1zM420.55 474.18h1.1v1.1h-1.1zM420.55 484.37h1.1v1.1h-1.1zM420.55 494.56h1.1v1.1h-1.1zM477.55 107.34h1.1v1.1h-1.1zM477.55 117.53h1.1v1.1h-1.1zM477.55 127.72h1.1v1.1h-1.1zM477.55 137.91h1.1v1.1h-1.1zM477.55 148.10h1.1v1.1h-1.1zM477.55 158.29h1.1v1.1h-1.1zM477.55 168.48h1.1v1.1h-1.1zM477.55 178.67h1.1v1.1h-1.1zM477.55 188.86h1.1v1.1h-1.1zM477.55 199.05h1.1v1.1h-1.1zM477.55 209.24h1.1v1.1h-1.1zM477.55 219.43h1.1v1.1h-1.1zM477.55 229.62h1.1v1.1h-1.1zM477.55 239.81h1.1v1.1h-1.1zM477.55 250.00h1.1v1.1h-1.1zM477.55 260.19h1.1v1.1h-1.1zM477.55 270.38h1.1v1.1h-1.1zM477.55 280.57h1.1v1.1h-1.1zM477.55 290.76h1.1v1.1h-1.1zM477.55 300.95h1.1v1.1h-1.1zM477.55 311.14h1.1v1.1h-1.1zM477.55 321.33h1.1v1.1h-1.1zM477.55 331.52h1.1v1.1h-1.1zM477.55 341.71h1.1v1.1h-1.1zM477.55 351.90h1.1v1.1h-1.1zM477.55 362.09h1.1v1.1h-1.1zM477.55 372.28h1.1v1.1h-1.1zM477.55 382.47h1.1v1.1h-1.1zM477.55 392.66h1.1v1.1h-1.1zM477.55 402.85h1.1v1.1h-1.1zM477.55 413.04h1.1v1.1h-1.1zM477.55 423.23h1.1v1.1h-1.1zM477.55 433.42h1.1v1.1h-1.1zM477.55 443.61h1.1v1.1h-1.1zM477.55 453.80h1.1v1.1h-1.1zM477.55 463.99h1.1v1.1h-1.1zM477.55 474.18h1.1v1.1h-1.1zM477.55 484.37h1.1v1.1h-1.1zM477.55 494.56h1.1v1.1h-1.1zM534.55 107.34h1.1v1.1h-1.1zM534.55 117.53h1.1v1.1h-1.1zM534.55 127.72h1.1v1.1h-1.1zM534.55 137.91h1.1v1.1h-1.1zM534.55 148.10h1.1v1.1h-1.1zM534.55 158.29h1.1v1.1h-1.1zM534.55 168.48h1.1v1.1h-1.1zM534.55 178.67h1.1v1.1h-1.1zM534.55 188.86h1.1v1.1h-1.1zM534.55 199.05h1.1v1.1h-1.1zM534.55 209.24h1.1v1.1h-1.1zM534.55 219.43h1.1v1.1h-1.1zM534.55 229.62h1.1v1.1h-1.1zM534.55 239.81h1.1v1.1h-1.1zM534.55 250.00h1.1v1.1h-1.1zM534.55 260.19h1.1v1.1h-1.1zM534.55 270.38h1.1v1.1h-1.1zM534.55 280.57h1.1v1.1h-1.1zM534.55 290.76h1.1v1.1h-1.1zM534.55 300.95h1.1v1.1h-1.1zM534.55 311.14h1.1v1.1h-1.1zM534.55 321.33h1.1v1.1h-1.1zM534.55 331.52h1.1v1.1h-1.1zM534.55 341.71h1.1v1.1h-1.1zM534.55 351.90h1.1v1.1h-1.1zM534.55 362.09h1.1v1.1h-1.1zM534.55 372.28h1.1v1.1h-1.1zM534.55 382.47h1.1v1.1h-1.1zM534.55 392.66h1.1v1.1h-1.1zM534.55 402.85h1.1v1.1h-1.1zM534.55 413.04h1.1v1.1h-1.1zM534.55 423.23h1.1v1.1h-1.1zM534.55 433.42h1.1v1.1h-1.1zM534.55 443.61h1.1v1.1h-1.1zM534.55 453.80h1.1v1.1h-1.1zM534.55 463.99h1.1v1.1h-1.1zM534.55 474.18h1.1v1.1h-1.1zM534.55 484.37h1.1v1.1h-1.1zM534.55 494.56h1.1v1.1h-1.1zM32.95 148.10h1.1v1.1h-1.1zM44.35 148.10h1.1v1.1h-1.1zM55.75 148.10h1.1v1.1h-1.1zM67.15 148.10h1.1v1.1h-1.1zM78.55 148.10h1.1v1.1h-1.1zM89.95 148.10h1.1v1.1h-1.1zM101.35 148.10h1.1v1.1h-1.1zM112.75 148.10h1.1v1.1h-1.1zM124.15 148.10h1.1v1.1h-1.1zM135.55 148.10h1.1v1.1h-1.1zM146.95 148.10h1.1v1.1h-1.1zM158.35 148.10h1.1v1.1h-1.1zM169.75 148.10h1.1v1.1h-1.1zM181.15 148.10h1.1v1.1h-1.1zM192.55 148.10h1.1v1.1h-1.1zM203.95 148.10h1.1v1.1h-1.1zM215.35 148.10h1.1v1.1h-1.1zM226.75 148.10h1.1v1.1h-1.1zM238.15 148.10h1.1v1.1h-1.1zM249.55 148.10h1.1v1.1h-1.1zM260.95 148.10h1.1v1.1h-1.1zM272.35 148.10h1.1v1.1h-1.1zM283.75 148.10h1.1v1.1h-1.1zM295.15 148.10h1.1v1.1h-1.1zM306.55 148.10h1.1v1.1h-1.1zM317.95 148.10h1.1v1.1h-1.1zM329.35 148.10h1.1v1.1h-1.1zM340.75 148.10h1.1v1.1h-1.1zM352.15 148.10h1.1v1.1h-1.1zM363.55 148.10h1.1v1.1h-1.1zM374.95 148.10h1.1v1.1h-1.1zM386.35 148.10h1.1v1.1h-1.1zM397.75 148.10h1.1v1.1h-1.1zM409.15 148.10h1.1v1.1h-1.1zM420.55 148.10h1.1v1.1h-1.1zM431.95 148.10h1.1v1.1h-1.1zM443.35 148.10h1.1v1.1h-1.1zM454.75 148.10h1.1v1.1h-1.1zM466.15 148.10h1.1v1.1h-1.1zM477.55 148.10h1.1v1.1h-1.1zM488.95 148.10h1.1v1.1h-1.1zM500.35 148.10h1.1v1.1h-1.1zM511.75 148.10h1.1v1.1h-1.1zM523.15 148.10h1.1v1.1h-1.1zM534.55 148.10h1.1v1.1h-1.1zM545.95 148.10h1.1v1.1h-1.1zM557.35 148.10h1.1v1.1h-1.1zM568.75 148.10h1.1v1.1h-1.1zM580.15 148.10h1.1v1.1h-1.1zM32.95 199.05h1.1v1.1h-1.1zM44.35 199.05h1.1v1.1h-1.1zM55.75 199.05h1.1v1.1h-1.1zM67.15 199.05h1.1v1.1h-1.1zM78.55 199.05h1.1v1.1h-1.1zM89.95 199.05h1.1v1.1h-1.1zM101.35 199.05h1.1v1.1h-1.1zM112.75 199.05h1.1v1.1h-1.1zM124.15 199.05h1.1v1.1h-1.1zM135.55 199.05h1.1v1.1h-1.1zM146.95 199.05h1.1v1.1h-1.1zM158.35 199.05h1.1v1.1h-1.1zM169.75 199.05h1.1v1.1h-1.1zM181.15 199.05h1.1v1.1h-1.1zM192.55 199.05h1.1v1.1h-1.1zM203.95 199.05h1.1v1.1h-1.1zM215.35 199.05h1.1v1.1h-1.1zM226.75 199.05h1.1v1.1h-1.1zM238.15 199.05h1.1v1.1h-1.1zM249.55 199.05h1.1v1.1h-1.1zM260.95 199.05h1.1v1.1h-1.1zM272.35 199.05h1.1v1.1h-1.1zM283.75 199.05h1.1v1.1h-1.1zM295.15 199.05h1.1v1.1h-1.1zM306.55 199.05h1.1v1.1h-1.1zM317.95 199.05h1.1v1.1h-1.1zM329.35 199.05h1.1v1.1h-1.1zM340.75 199.05h1.1v1.1h-1.1zM352.15 199.05h1.1v1.1h-1.1zM363.55 199.05h1.1v1.1h-1.1zM374.95 199.05h1.1v1.1h-1.1zM386.35 199.05h1.1v1.1h-1.1zM397.75 199.05h1.1v1.1h-1.1zM409.15 199.05h1.1v1.1h-1.1zM420.55 199.05h1.1v1.1h-1.1zM431.95 199.05h1.1v1.1h-1.1zM443.35 199.05h1.1v1.1h-1.1zM454.75 199.05h1.1v1.1h-1.1zM466.15 199.05h1.1v1.1h-1.1zM477.55 199.05h1.1v1.1h-1.1zM488.95 199.05h1.1v1.1h-1.1zM500.35 199.05h1.1v1.1h-1.1zM511.75 199.05h1.1v1.1h-1.1zM523.15 199.05h1.1v1.1h-1.1zM534.55 199.05h1.1v1.1h-1.1zM545.95 199.05h1.1v1.1h-1.1zM557.35 199.05h1.1v1.1h-1.1zM568.75 199.05h1.1v1.1h-1.1zM580.15 199.05h1.1v1.1h-1.1zM32.95 250.00h1.1v1.1h-1.1zM44.35 250.00h1.1v1.1h-1.1zM55.75 250.00h1.1v1.1h-1.1zM67.15 250.00h1.1v1.1h-1.1zM78.55 250.00h1.1v1.1h-1.1zM89.95 250.00h1.1v1.1h-1.1zM101.35 250.00h1.1v1.1h-1.1zM112.75 250.00h1.1v1.1h-1.1zM124.15 250.00h1.1v1.1h-1.1zM135.55 250.00h1.1v1.1h-1.1zM146.95 250.00h1.1v1.1h-1.1zM158.35 250.00h1.1v1.1h-1.1zM169.75 250.00h1.1v1.1h-1.1zM181.15 250.00h1.1v1.1h-1.1zM192.55 250.00h1.1v1.1h-1.1zM203.95 250.00h1.1v1.1h-1.1zM215.35 250.00h1.1v1.1h-1.1zM226.75 250.00h1.1v1.1h-1.1zM238.15 250.00h1.1v1.1h-1.1zM249.55 250.00h1.1v1.1h-1.1zM260.95 250.00h1.1v1.1h-1.1zM272.35 250.00h1.1v1.1h-1.1zM283.75 250.00h1.1v1.1h-1.1zM295.15 250.00h1.1v1.1h-1.1zM306.55 250.00h1.1v1.1h-1.1zM317.95 250.00h1.1v1.1h-1.1zM329.35 250.00h1.1v1.1h-1.1zM340.75 250.00h1.1v1.1h-1.1zM352.15 250.00h1.1v1.1h-1.1zM363.55 250.00h1.1v1.1h-1.1zM374.95 250.00h1.1v1.1h-1.1zM386.35 250.00h1.1v1.1h-1.1zM397.75 250.00h1.1v1.1h-1.1zM409.15 250.00h1.1v1.1h-1.1zM420.55 250.00h1.1v1.1h-1.1zM431.95 250.00h1.1v1.1h-1.1zM443.35 250.00h1.1v1.1h-1.1zM454.75 250.00h1.1v1.1h-1.1zM466.15 250.00h1.1v1.1h-1.1zM477.55 250.00h1.1v1.1h-1.1zM488.95 250.00h1.1v1.1h-1.1zM500.35 250.00h1.1v1.1h-1.1zM511.75 250.00h1.1v1.1h-1.1zM523.15 250.00h1.1v1.1h-1.1zM534.55 250.00h1.1v1.1h-1.1zM545.95 250.00h1.1v1.1h-1.1zM557.35 250.00h1.1v1.1h-1.1zM568.75 250.00h1.1v1.1h-1.1zM580.15 250.00h1.1v1.1h-1.1zM32.95 351.90h1.1v1.1h-1.1zM44.35 351.90h1.1v1.1h-1.1zM55.75 351.90h1.1v1.1h-1.1zM67.15 351.90h1.1v1.1h-1.1zM78.55 351.90h1.1v1.1h-1.1zM89.95 351.90h1.1v1.1h-1.1zM101.35 351.90h1.1v1.1h-1.1zM112.75 351.90h1.1v1.1h-1.1zM124.15 351.90h1.1v1.1h-1.1zM135.55 351.90h1.1v1.1h-1.1zM146.95 351.90h1.1v1.1h-1.1zM158.35 351.90h1.1v1.1h-1.1zM169.75 351.90h1.1v1.1h-1.1zM181.15 351.90h1.1v1.1h-1.1zM192.55 351.90h1.1v1.1h-1.1zM203.95 351.90h1.1v1.1h-1.1zM215.35 351.90h1.1v1.1h-1.1zM226.75 351.90h1.1v1.1h-1.1zM238.15 351.90h1.1v1.1h-1.1zM249.55 351.90h1.1v1.1h-1.1zM260.95 351.90h1.1v1.1h-1.1zM272.35 351.90h1.1v1.1h-1.1zM283.75 351.90h1.1v1.1h-1.1zM295.15 351.90h1.1v1.1h-1.1zM306.55 351.90h1.1v1.1h-1.1zM317.95 351.90h1.1v1.1h-1.1zM329.35 351.90h1.1v1.1h-1.1zM340.75 351.90h1.1v1.1h-1.1zM352.15 351.90h1.1v1.1h-1.1zM363.55 351.90h1.1v1.1h-1.1zM374.95 351.90h1.1v1.1h-1.1zM386.35 351.90h1.1v1.1h-1.1zM397.75 351.90h1.1v1.1h-1.1zM409.15 351.90h1.1v1.1h-1.1zM420.55 351.90h1.1v1.1h-1.1zM431.95 351.90h1.1v1.1h-1.1zM443.35 351.90h1.1v1.1h-1.1zM454.75 351.90h1.1v1.1h-1.1zM466.15 351.90h1.1v1.1h-1.1zM477.55 351.90h1.1v1.1h-1.1zM488.95 351.90h1.1v1.1h-1.1zM500.35 351.90h1.1v1.1h-1.1zM511.75 351.90h1.1v1.1h-1.1zM523.15 351.90h1.1v1.1h-1.1zM534.55 351.90h1.1v1.1h-1.1zM545.95 351.90h1.1v1.1h-1.1zM557.35 351.90h1.1v1.1h-1.1zM568.75 351.90h1.1v1.1h-1.1zM580.15 351.90h1.1v1.1h-1.1zM32.95 402.85h1.1v1.1h-1.1zM44.35 402.85h1.1v1.1h-1.1zM55.75 402.85h1.1v1.1h-1.1zM67.15 402.85h1.1v1.1h-1.1zM78.55 402.85h1.1v1.1h-1.1zM89.95 402.85h1.1v1.1h-1.1zM101.35 402.85h1.1v1.1h-1.1zM112.75 402.85h1.1v1.1h-1.1zM124.15 402.85h1.1v1.1h-1.1zM135.55 402.85h1.1v1.1h-1.1zM146.95 402.85h1.1v1.1h-1.1zM158.35 402.85h1.1v1.1h-1.1zM169.75 402.85h1.1v1.1h-1.1zM181.15 402.85h1.1v1.1h-1.1zM192.55 402.85h1.1v1.1h-1.1zM203.95 402.85h1.1v1.1h-1.1zM215.35 402.85h1.1v1.1h-1.1zM226.75 402.85h1.1v1.1h-1.1zM238.15 402.85h1.1v1.1h-1.1zM249.55 402.85h1.1v1.1h-1.1zM260.95 402.85h1.1v1.1h-1.1zM272.35 402.85h1.1v1.1h-1.1zM283.75 402.85h1.1v1.1h-1.1zM295.15 402.85h1.1v1.1h-1.1zM306.55 402.85h1.1v1.1h-1.1zM317.95 402.85h1.1v1.1h-1.1zM329.35 402.85h1.1v1.1h-1.1zM340.75 402.85h1.1v1.1h-1.1zM352.15 402.85h1.1v1.1h-1.1zM363.55 402.85h1.1v1.1h-1.1zM374.95 402.85h1.1v1.1h-1.1zM386.35 402.85h1.1v1.1h-1.1zM397.75 402.85h1.1v1.1h-1.1zM409.15 402.85h1.1v1.1h-1.1zM420.55 402.85h1.1v1.1h-1.1zM431.95 402.85h1.1v1.1h-1.1zM443.35 402.85h1.1v1.1h-1.1zM454.75 402.85h1.1v1.1h-1.1zM466.15 402.85h1.1v1.1h-1.1zM477.55 402.85h1.1v1.1h-1.1zM488.95 402.85h1.1v1.1h-1.1zM500.35 402.85h1.1v1.1h-1.1zM511.75 402.85h1.1v1.1h-1.1zM523.15 402.85h1.1v1.1h-1.1zM534.55 402.85h1.1v1.1h-1.1zM545.95 402.85h1.1v1.1h-1.1zM557.35 402.85h1.1v1.1h-1.1zM568.75 402.85h1.1v1.1h-1.1zM580.15 402.85h1.1v1.1h-1.1zM32.95 453.80h1.1v1.1h-1.1zM44.35 453.80h1.1v1.1h-1.1zM55.75 453.80h1.1v1.1h-1.1zM67.15 453.80h1.1v1.1h-1.1zM78.55 453.80h1.1v1.1h-1.1zM89.95 453.80h1.1v1.1h-1.1zM101.35 453.80h1.1v1.1h-1.1zM112.75 453.80h1.1v1.1h-1.1zM124.15 453.80h1.1v1.1h-1.1zM135.55 453.80h1.1v1.1h-1.1zM146.95 453.80h1.1v1.1h-1.1zM158.35 453.80h1.1v1.1h-1.1zM169.75 453.80h1.1v1.1h-1.1zM181.15 453.80h1.1v1.1h-1.1zM192.55 453.80h1.1v1.1h-1.1zM203.95 453.80h1.1v1.1h-1.1zM215.35 453.80h1.1v1.1h-1.1zM226.75 453.80h1.1v1.1h-1.1zM238.15 453.80h1.1v1.1h-1.1zM249.55 453.80h1.1v1.1h-1.1zM260.95 453.80h1.1v1.1h-1.1zM272.35 453.80h1.1v1.1h-1.1zM283.75 453.80h1.1v1.1h-1.1zM295.15 453.80h1.1v1.1h-1.1zM306.55 453.80h1.1v1.1h-1.1zM317.95 453.80h1.1v1.1h-1.1zM329.35 453.80h1.1v1.1h-1.1zM340.75 453.80h1.1v1.1h-1.1zM352.15 453.80h1.1v1.1h-1.1zM363.55 453.80h1.1v1.1h-1.1zM374.95 453.80h1.1v1.1h-1.1zM386.35 453.80h1.1v1.1h-1.1zM397.75 453.80h1.1v1.1h-1.1zM409.15 453.80h1.1v1.1h-1.1zM420.55 453.80h1.1v1.1h-1.1zM431.95 453.80h1.1v1.1h-1.1zM443.35 453.80h1.1v1.1h-1.1zM454.75 453.80h1.1v1.1h-1.1zM466.15 453.80h1.1v1.1h-1.1zM477.55 453.80h1.1v1.1h-1.1zM488.95 453.80h1.1v1.1h-1.1zM500.35 453.80h1.1v1.1h-1.1zM511.75 453.80h1.1v1.1h-1.1zM523.15 453.80h1.1v1.1h-1.1zM534.55 453.80h1.1v1.1h-1.1zM545.95 453.80h1.1v1.1h-1.1zM557.35 453.80h1.1v1.1h-1.1zM568.75 453.80h1.1v1.1h-1.1zM580.15 453.80h1.1v1.1h-1.1z" fill="#8c8c8c"/>
<path d="M307.10 97.7V505.30M22.1 301.50H592.10" stroke="#b0b0b0" stroke-width="1.1"/>
<path d="M33.50 97.70v3.5M33.50 505.30v-3.5M33.50 298.25v6.5M44.90 97.70v3.5M44.90 505.30v-3.5M44.90 298.25v6.5M56.30 97.70v3.5M56.30 505.30v-3.5M56.30 298.25v6.5M67.70 97.70v3.5M67.70 505.30v-3.5M67.70 298.25v6.5M79.10 97.70v3.5M79.10 505.30v-3.5M79.10 298.25v6.5M90.50 97.70v3.5M90.50 505.30v-3.5M90.50 298.25v6.5M101.90 97.70v3.5M101.90 505.30v-3.5M101.90 298.25v6.5M113.30 97.70v3.5M113.30 505.30v-3.5M113.30 298.25v6.5M124.70 97.70v3.5M124.70 505.30v-3.5M124.70 298.25v6.5M136.10 97.70v3.5M136.10 505.30v-3.5M136.10 298.25v6.5M147.50 97.70v3.5M147.50 505.30v-3.5M147.50 298.25v6.5M158.90 97.70v3.5M158.90 505.30v-3.5M158.90 298.25v6.5M170.30 97.70v3.5M170.30 505.30v-3.5M170.30 298.25v6.5M181.70 97.70v3.5M181.70 505.30v-3.5M181.70 298.25v6.5M193.10 97.70v3.5M193.10 505.30v-3.5M193.10 298.25v6.5M204.50 97.70v3.5M204.50 505.30v-3.5M204.50 298.25v6.5M215.90 97.70v3.5M215.90 505.30v-3.5M215.90 298.25v6.5M227.30 97.70v3.5M227.30 505.30v-3.5M227.30 298.25v6.5M238.70 97.70v3.5M238.70 505.30v-3.5M238.70 298.25v6.5M250.10 97.70v3.5M250.10 505.30v-3.5M250.10 298.25v6.5M261.50 97.70v3.5M261.50 505.30v-3.5M261.50 298.25v6.5M272.90 97.70v3.5M272.90 505.30v-3.5M272.90 298.25v6.5M284.30 97.70v3.5M284.30 505.30v-3.5M284.30 298.25v6.5M295.70 97.70v3.5M295.70 505.30v-3.5M295.70 298.25v6.5M307.10 97.70v3.5M307.10 505.30v-3.5M307.10 298.25v6.5M318.50 97.70v3.5M318.50 505.30v-3.5M318.50 298.25v6.5M329.90 97.70v3.5M329.90 505.30v-3.5M329.90 298.25v6.5M341.30 97.70v3.5M341.30 505.30v-3.5M341.30 298.25v6.5M352.70 97.70v3.5M352.70 505.30v-3.5M352.70 298.25v6.5M364.10 97.70v3.5M364.10 505.30v-3.5M364.10 298.25v6.5M375.50 97.70v3.5M375.50 505.30v-3.5M375.50 298.25v6.5M386.90 97.70v3.5M386.90 505.30v-3.5M386.90 298.25v6.5M398.30 97.70v3.5M398.30 505.30v-3.5M398.30 298.25v6.5M409.70 97.70v3.5M409.70 505.30v-3.5M409.70 298.25v6.5M421.10 97.70v3.5M421.10 505.30v-3.5M421.10 298.25v6.5M432.50 97.70v3.5M432.50 505.30v-3.5M432.50 298.25v6.5M443.90 97.70v3.5M443.90 505.30v-3.5M443.90 298.25v6.5M455.30 97.70v3.5M455.30 505.30v-3.5M455.30 298.25v6.5M466.70 97.70v3.5M466.70 505.30v-3.5M466.70 298.25v6.5M478.10 97.70v3.5M478.10 505.30v-3.5M478.10 298.25v6.5M489.50 97.70v3.5M489.50 505.30v-3.5M489.50 298.25v6.5M500.90 97.70v3.5M500.90 505.30v-3.5M500.90 298.25v6.5M512.30 97.70v3.5M512.30 505.30v-3.5M512.30 298.25v6.5M523.70 97.70v3.5M523.70 505.30v-3.5M523.70 298.25v6.5M535.10 97.70v3.5M535.10 505.30v-3.5M535.10 298.25v6.5M546.50 97.70v3.5M546.50 505.30v-3.5M546.50 298.25v6.5M557.90 97.70v3.5M557.90 505.30v-3.5M557.90 298.25v6.5M569.30 97.70v3.5M569.30 505.30v-3.5M569.30 298.25v6.5M580.70 97.70v3.5M580.70 505.30v-3.5M580.70 298.25v6.5M22.10 107.89h3.5M592.10 107.89h-3.5M303.85 107.89h6.5M22.10 118.08h3.5M592.10 118.08h-3.5M303.85 118.08h6.5M22.10 128.27h3.5M592.10 128.27h-3.5M303.85 128.27h6.5M22.10 138.46h3.5M592.10 138.46h-3.5M303.85 138.46h6.5M22.10 148.65h3.5M592.10 148.65h-3.5M303.85 148.65h6.5M22.10 158.84h3.5M592.10 158.84h-3.5M303.85 158.84h6.5M22.10 169.03h3.5M592.10 169.03h-3.5M303.85 169.03h6.5M22.10 179.22h3.5M592.10 179.22h-3.5M303.85 179.22h6.5M22.10 189.41h3.5M592.10 189.41h-3.5M303.85 189.41h6.5M22.10 199.60h3.5M592.10 199.60h-3.5M303.85 199.60h6.5M22.10 209.79h3.5M592.10 209.79h-3.5M303.85 209.79h6.5M22.10 219.98h3.5M592.10 219.98h-3.5M303.85 219.98h6.5M22.10 230.17h3.5M592.10 230.17h-3.5M303.85 230.17h6.5M22.10 240.36h3.5M592.10 240.36h-3.5M303.85 240.36h6.5M22.10 250.55h3.5M592.10 250.55h-3.5M303.85 250.55h6.5M22.10 260.74h3.5M592.10 260.74h-3.5M303.85 260.74h6.5M22.10 270.93h3.5M592.10 270.93h-3.5M303.85 270.93h6.5M22.10 281.12h3.5M592.10 281.12h-3.5M303.85 281.12h6.5M22.10 291.31h3.5M592.10 291.31h-3.5M303.85 291.31h6.5M22.10 301.50h3.5M592.10 301.50h-3.5M303.85 301.50h6.5M22.10 311.69h3.5M592.10 311.69h-3.5M303.85 311.69h6.5M22.10 321.88h3.5M592.10 321.88h-3.5M303.85 321.88h6.5M22.10 332.07h3.5M592.10 332.07h-3.5M303.85 332.07h6.5M22.10 342.26h3.5M592.10 342.26h-3.5M303.85 342.26h6.5M22.10 352.45h3.5M592.10 352.45h-3.5M303.85 352.45h6.5M22.10 362.64h3.5M592.10 362.64h-3.5M303.85 362.64h6.5M22.10 372.83h3.5M592.10 372.83h-3.5M303.85 372.83h6.5M22.10 383.02h3.5M592.10 383.02h-3.5M303.85 383.02h6.5M22.10 393.21h3.5M592.10 393.21h-3.5M303.85 393.21h6.5M22.10 403.40h3.5M592.10 403.40h-3.5M303.85 403.40h6.5M22.10 413.59h3.5M592.10 413.59h-3.5M303.85 413.59h6.5M22.10 423.78h3.5M592.10 423.78h-3.5M303.85 423.78h6.5M22.10 433.97h3.5M592.10 433.97h-3.5M303.85 433.97h6.5M22.10 444.16h3.5M592.10 444.16h-3.5M303.85 444.16h6.5M22.10 454.35h3.5M592.10 454.35h-3.5M303.85 454.35h6.5M22.10 464.54h3.5M592.10 464.54h-3.5M303.85 464.54h6.5M22.10 474.73h3.5M592.10 474.73h-3.5M303.85 474.73h6.5M22.10 484.92h3.5M592.10 484.92h-3.5M303.85 484.92h6.5M22.10 495.11h3.5M592.10 495.11h-3.5M303.85 495.11h6.5" stroke="#b8b8b8" stroke-width="1"/>
<rect x="22.1" y="97.7" width="570.00" height="407.60" fill="none" stroke="#d0d0d0" stroke-width="1.6"/>
<path d="M22.0 163.9 L23.5 164.6 L25.0 165.9 L26.5 166.6 L28.0 167.8 L29.5 169.7 L31.0 170.4 L32.5 172.9 L34.0 173.6 L35.5 174.2 L37.0 176.1 L38.5 177.4 L40.0 178.1 L41.5 177.5 L43.0 176.8 L44.5 175.5 L46.0 173.6 L47.5 173.0 L49.0 171.1 L50.5 170.4 L52.0 169.1 L53.5 167.3 L55.0 166.6 L56.5 164.7 L58.0 164.0 L59.5 162.7 L61.0 160.9 L62.5 160.2 L64.0 158.9 L65.5 157.6 L67.0 155.8 L68.5 155.1 L70.0 153.2 L71.5 152.5 L73.0 151.3 L74.5 150.6 L76.0 148.7 L77.5 147.4 L79.0 146.2 L80.5 144.3 L82.0 143.6 L83.5 142.9 L85.0 141.1 L86.5 139.8 L88.0 137.9 L89.5 137.2 L91.0 135.9 L92.5 134.7 L94.0 134.0 L95.5 131.5 L97.0 130.8 L98.5 130.8 L100.0 132.7 L101.5 133.4 L103.0 135.3 L104.5 136.5 L106.0 137.8 L107.5 139.1 L109.0 140.4 L110.5 142.2 L112.0 142.9 L113.5 144.2 L115.0 145.5 L116.5 147.4 L118.0 148.6 L119.5 149.3 L121.0 150.6 L122.5 151.9 L124.0 152.5 L125.5 154.4 L127.0 156.3 L128.5 157.0 L130.0 158.2 L131.5 160.1 L133.0 160.8 L134.5 162.7 L136.0 163.3 L137.5 164.0 L139.0 165.3 L140.5 167.2 L142.0 168.4 L143.5 169.7 L145.0 171.6 L146.5 172.3 L148.0 173.6 L149.5 174.8 L151.0 175.5 L152.5 176.8 L154.0 178.7 L155.5 178.1 L157.0 177.4 L158.5 176.1 L160.0 174.8 L161.5 173.0 L163.0 171.7 L164.5 170.4 L166.0 169.1 L167.5 167.3 L169.0 166.0 L170.5 165.9 L172.0 164.0 L173.5 162.1 L175.0 160.9 L176.5 160.8 L178.0 158.9 L179.5 157.6 L181.0 157.0 L182.5 155.1 L184.0 154.4 L185.5 151.9 L187.0 151.3 L188.5 150.6 L190.0 148.7 L191.5 147.4 L193.0 145.6 L194.5 144.9 L196.0 143.0 L197.5 142.3 L199.0 141.7 L200.5 139.8 L202.0 138.5 L203.5 137.2 L205.0 135.9 L206.5 134.7 L208.0 132.8 L209.5 132.1 L211.0 130.8 L212.5 131.4 L214.0 132.7 L215.5 134.6 L217.0 135.3 L218.5 136.5 L220.0 137.8 L221.5 139.7 L223.0 140.4 L224.5 142.2 L226.0 142.9 L227.5 144.2 L229.0 145.5 L230.5 146.2 L232.0 148.0 L233.5 149.3 L235.0 150.6 L236.5 151.9 L238.0 152.5 L239.5 154.4 L241.0 155.7 L242.5 157.0 L244.0 158.8 L245.5 160.1 L247.0 160.2 L248.5 162.1 L250.0 163.3 L251.5 164.6 L253.0 166.5 L254.5 167.2 L256.0 168.4 L257.5 170.3 L259.0 171.0 L260.5 172.3 L262.0 173.6 L263.5 174.2 L265.0 176.1 L266.5 177.4 L268.0 178.7 L269.5 178.1 L271.0 176.8 L272.5 175.5 L274.0 173.6 L275.5 173.0 L277.0 171.7 L278.5 169.8 L280.0 169.1 L281.5 167.3 L283.0 166.6 L284.5 165.3 L286.0 164.0 L287.5 162.1 L289.0 162.1 L290.5 160.2 L292.0 158.3 L293.5 157.0 L295.0 155.8 L296.5 155.1 L298.0 153.8 L299.5 152.5 L301.0 150.7 L302.5 150.6 L304.0 148.7 L305.5 146.8 L307.0 145.6 L308.5 144.9 L310.0 143.6 L311.5 142.3 L313.0 141.1 L314.5 140.4 L316.0 139.1 L317.5 137.2 L319.0 136.5 L320.5 134.7 L322.0 132.8 L323.5 131.5 L325.0 130.8 L326.5 131.4 L328.0 132.7 L329.5 134.0 L331.0 135.9 L332.5 135.9 L334.0 137.8 L335.5 138.5 L337.0 141.0 L338.5 142.2 L340.0 142.9 L341.5 144.2 L343.0 145.5 L344.5 146.2 L346.0 148.0 L347.5 149.3 L349.0 151.2 L350.5 151.9 L352.0 153.1 L353.5 153.8 L355.0 155.7 L356.5 157.6 L358.0 157.6 L359.5 160.1 L361.0 160.8 L362.5 162.7 L364.0 163.3 L365.5 165.2 L367.0 165.9 L368.5 167.2 L370.0 168.4 L371.5 169.7 L373.0 171.6 L374.5 172.3 L376.0 173.6 L377.5 174.8 L379.0 176.1 L380.5 177.4 L382.0 178.7 L383.5 178.1 L385.0 176.8 L386.5 175.5 L388.0 174.8 L389.5 172.4 L391.0 171.1 L392.5 171.0 L394.0 169.1 L395.5 168.5 L397.0 166.6 L398.5 165.3 L400.0 164.6 L401.5 162.7 L403.0 162.1 L404.5 160.8 L406.0 158.3 L407.5 157.6 L409.0 155.8 L410.5 155.1 L412.0 153.8 L413.5 152.5 L415.0 151.9 L416.5 150.0 L418.0 148.7 L419.5 147.4 L421.0 146.2 L422.5 144.3 L424.0 143.6 L425.5 142.9 L427.0 140.5 L428.5 139.2 L430.0 138.5 L431.5 137.2 L433.0 135.9 L434.5 134.7 L436.0 133.4 L437.5 132.7 L439.0 130.2 L440.5 131.4 L442.0 132.7 L443.5 134.0 L445.0 134.7 L446.5 136.5 L448.0 137.8 L449.5 139.1 L451.0 139.8 L452.5 141.6 L454.0 142.9 L455.5 144.2 L457.0 145.5 L458.5 146.8 L460.0 148.0 L461.5 149.3 L463.0 151.2 L464.5 151.9 L466.0 153.1 L467.5 154.4 L469.0 155.7 L470.5 156.4 L472.0 157.6 L473.5 158.9 L475.0 160.8 L476.5 162.1 L478.0 163.3 L479.5 164.6 L481.0 165.9 L482.5 166.6 L484.0 169.0 L485.5 169.7 L487.0 171.6 L488.5 172.3 L490.0 173.6 L491.5 174.8 L493.0 176.7 L494.5 178.0 L496.0 178.7 L497.5 178.1 L499.0 176.8 L500.5 174.9 L502.0 174.8 L503.5 173.0 L505.0 171.7 L506.5 170.4 L508.0 169.1 L509.5 167.9 L511.0 166.6 L512.5 165.3 L514.0 164.0 L515.5 162.7 L517.0 161.5 L518.5 159.6 L520.0 158.9 L521.5 157.6 L523.0 156.4 L524.5 154.5 L526.0 153.8 L527.5 152.5 L529.0 151.3 L530.5 150.0 L532.0 148.7 L533.5 146.8 L535.0 146.2 L536.5 144.3 L538.0 144.2 L539.5 142.3 L541.0 141.1 L542.5 139.8 L544.0 138.5 L545.5 136.6 L547.0 135.9 L548.5 134.1 L550.0 133.4 L551.5 132.1 L553.0 131.4 L554.5 130.8 L556.0 132.1 L557.5 134.0 L559.0 135.3 L560.5 136.5 L562.0 137.2 L563.5 138.5 L565.0 140.4 L566.5 142.2 L568.0 142.9 L569.5 144.2 L571.0 145.5 L572.5 146.8 L574.0 148.0 L575.5 149.9 L577.0 150.6 L578.5 151.9 L580.0 153.1 L581.5 154.4 L583.0 155.7 L584.5 157.0 L586.0 158.2 L587.5 160.1 L589.0 160.8 L590.5 162.1 L592.0 163.3" fill="none" stroke="#e8ee58" stroke-width="1.1"/>
<path d="M22.1 256.5 L41.5 256.5 L41.5 204.5 L64.6 204.5 L64.6 256.5 L269.5 256.5 L269.5 204.5 L292.6 204.5 L292.6 256.5 L497.5 256.5 L497.5 204.5 L520.6 204.5 L520.6 256.5 L592.1 256.5" fill="none" stroke="#62dcd4" stroke-width="1.1"/><path d="M25.5 256.5v-2.0M39.7 256.5v-1.3M35.3 256.5v-1.3M183.5 256.5v-1.3M249.9 256.5v-1.3M160.4 256.5v-1.3M187.8 256.5v-1.3M164.1 256.5v-1.3M132.4 256.5v-2.0M79.9 256.5v-1.3M98.3 256.5v-2.0M221.8 256.5v-1.3M104.5 256.5v-1.3M114.1 256.5v-2.0M151.3 256.5v-0.8M152.9 256.5v-1.3M108.6 256.5v-1.3M200.5 256.5v-1.3M145.7 256.5v-2.0M112.1 256.5v-0.8M147.7 256.5v-2.0M66.9 256.5v-2.0M109.6 256.5v-0.8M135.7 256.5v-0.8M140.9 256.5v-1.3M67.5 256.5v-1.3M265.6 256.5v-2.0M102.3 256.5v-0.8M220.5 256.5v-2.0M204.6 256.5v-1.3M247.5 256.5v-2.0M99.3 256.5v-1.3M241.8 256.5v-1.3M205.8 256.5v-0.8M259.1 256.5v-0.8M72.1 256.5v-1.3M174.0 256.5v-2.0M235.7 256.5v-0.8M202.7 256.5v-2.0M226.3 256.5v-1.3M204.7 256.5v-1.3M215.4 256.5v-2.0M263.4 256.5v-1.3M323.7 256.5v-1.3M328.0 256.5v-1.3M371.6 256.5v-2.0M408.5 256.5v-0.8M440.6 256.5v-1.3M442.8 256.5v-2.0M383.2 256.5v-1.3M310.8 256.5v-0.8M433.6 256.5v-2.0M475.9 256.5v-1.3M438.5 256.5v-1.3M393.2 256.5v-2.0M421.5 256.5v-0.8M343.6 256.5v-0.8M461.7 256.5v-2.0M433.1 256.5v-2.0M445.3 256.5v-2.0M464.1 256.5v-1.3M477.7 256.5v-1.3M367.3 256.5v-0.8M413.1 256.5v-1.3M381.4 256.5v-2.0M489.3 256.5v-1.3M461.0 256.5v-2.0M423.2 256.5v-2.0M470.7 256.5v-1.3M372.9 256.5v-1.3M415.4 256.5v-1.3M401.9 256.5v-1.3M400.7 256.5v-2.0M317.8 256.5v-2.0M485.2 256.5v-1.3M356.0 256.5v-2.0M441.0 256.5v-2.0M432.5 256.5v-1.3M336.8 256.5v-2.0M332.4 256.5v-1.3M338.4 256.5v-2.0M321.4 256.5v-2.0M401.5 256.5v-0.8M589.5 256.5v-2.0M586.4 256.5v-1.3M569.4 256.5v-0.8M567.0 256.5v-2.0M583.3 256.5v-0.8M555.5 256.5v-1.3M537.0 256.5v-0.8M524.7 256.5v-0.8M569.6 256.5v-1.3M534.3 256.5v-2.0M581.3 256.5v-2.0M537.3 256.5v-1.3M527.6 256.5v-1.3M561.9 256.5v-2.0M43.5 204.5v-1.2M58.0 204.5v-0.7M45.5 204.5v-1.2M61.8 204.5v-1.8M57.5 204.5v-0.7M271.9 204.5v-1.2M279.4 204.5v-1.2M277.4 204.5v-1.8M283.6 204.5v-1.2M280.0 204.5v-1.8M514.6 204.5v-1.8M507.1 204.5v-1.2M502.6 204.5v-1.8M519.0 204.5v-1.8M507.8 204.5v-1.8" fill="none" stroke="#62dcd4" stroke-width="1"/>
<path d="M22.1 376.5 L29.0 376.5 L29.0 328.5 L86.0 328.5 L86.0 376.5 L143.0 376.5 L143.0 328.5 L200.0 328.5 L200.0 376.5 L257.0 376.5 L257.0 328.5 L314.0 328.5 L314.0 376.5 L371.0 376.5 L371.0 328.5 L428.0 328.5 L428.0 376.5 L485.0 376.5 L485.0 328.5 L542.0 328.5 L542.0 376.5 L592.1 376.5" fill="none" stroke="#d840e8" stroke-width="1.1"/><path d="M31.0 328.5v-2.5M33.0 328.5v-2M36.0 328.5v-1.5M65.7 328.5v-1.2M83.4 328.5v-1.8M53.6 328.5v-1.8M64.5 328.5v-1.2M44.8 328.5v-1.8M52.9 328.5v-1.2M67.3 328.5v-0.7M80.0 328.5v-0.7M145.0 328.5v-2.5M147.0 328.5v-2M150.0 328.5v-1.5M170.1 328.5v-1.8M177.0 328.5v-1.2M196.6 328.5v-1.2M156.7 328.5v-1.2M176.0 328.5v-1.2M155.6 328.5v-1.8M198.7 328.5v-1.2M152.7 328.5v-1.2M259.0 328.5v-2.5M261.0 328.5v-2M264.0 328.5v-1.5M311.3 328.5v-1.8M287.8 328.5v-1.2M304.0 328.5v-1.8M284.1 328.5v-1.8M281.3 328.5v-0.7M296.7 328.5v-0.7M295.7 328.5v-1.2M289.0 328.5v-0.7M373.0 328.5v-2.5M375.0 328.5v-2M378.0 328.5v-1.5M380.5 328.5v-1.2M383.4 328.5v-1.2M406.2 328.5v-1.8M386.6 328.5v-1.8M416.9 328.5v-0.7M391.3 328.5v-0.7M407.5 328.5v-0.7M412.4 328.5v-1.2M487.0 328.5v-2.5M489.0 328.5v-2M492.0 328.5v-1.5M499.4 328.5v-1.8M517.1 328.5v-1.8M495.7 328.5v-1.2M504.7 328.5v-1.2M540.3 328.5v-0.7M495.5 328.5v-1.2M537.6 328.5v-0.7M507.4 328.5v-1.2M87.5 376.5v3M90.0 376.5v2.5M93.0 376.5v2M108.8 376.5v-1.2M131.8 376.5v-0.7M121.2 376.5v-1.8M113.7 376.5v-1.8M120.3 376.5v-1.2M115.5 376.5v-1.8M139.7 376.5v-0.7M135.5 376.5v-0.7M201.5 376.5v3M204.0 376.5v2.5M207.0 376.5v2M231.9 376.5v-1.8M247.5 376.5v-1.2M246.1 376.5v-1.8M231.1 376.5v-1.2M217.0 376.5v-1.8M217.0 376.5v-0.7M254.6 376.5v-1.2M240.5 376.5v-0.7M315.5 376.5v3M318.0 376.5v2.5M321.0 376.5v2M361.5 376.5v-0.7M355.3 376.5v-1.8M341.5 376.5v-1.8M341.6 376.5v-1.8M352.2 376.5v-1.2M322.3 376.5v-1.8M351.9 376.5v-1.8M330.1 376.5v-1.2M429.5 376.5v3M432.0 376.5v2.5M435.0 376.5v2M448.0 376.5v-1.2M437.7 376.5v-1.2M479.1 376.5v-1.8M443.2 376.5v-1.8M471.7 376.5v-1.2M455.1 376.5v-0.7M467.4 376.5v-1.2M479.9 376.5v-1.2M543.5 376.5v3M546.0 376.5v2.5M549.0 376.5v2M553.7 376.5v-1.8M587.4 376.5v-0.7M578.6 376.5v-0.7M564.0 376.5v-1.8M590.5 376.5v-0.7M587.1 376.5v-1.8M553.8 376.5v-0.7M557.5 376.5v-1.2M27.0 376.5v-1.8M24.3 376.5v-1.8" fill="none" stroke="#d840e8" stroke-width="1"/>
<path d="M22.0 432.5 L23.5 431.5 L25.0 431.5 L26.5 430.5 L28.0 430.5 L29.5 430.5 L31.0 430.5 L32.5 430.5 L34.0 430.5 L35.5 430.5 L37.0 430.5 L38.5 430.5 L40.0 430.5 L41.5 431.5 L43.0 432.5 L44.5 433.5 L46.0 434.5 L47.5 435.5 L49.0 436.5 L50.5 437.5 L52.0 439.5 L53.5 440.5 L55.0 442.5 L56.5 443.5 L58.0 445.5 L59.5 447.5 L61.0 448.5 L62.5 450.5 L64.0 452.5 L65.5 453.5 L67.0 455.5 L68.5 457.5 L70.0 458.5 L71.5 459.5 L73.0 461.5 L74.5 462.5 L76.0 463.5 L77.5 465.5 L79.0 466.5 L80.5 466.5 L82.0 467.5 L83.5 468.5 L85.0 468.5 L86.5 468.5 L88.0 468.5 L89.5 468.5 L91.0 468.5 L92.5 468.5 L94.0 468.5 L95.5 468.5 L97.0 468.5 L98.5 467.5 L100.0 466.5 L101.5 465.5 L103.0 464.5 L104.5 463.5 L106.0 462.5 L107.5 461.5 L109.0 459.5 L110.5 458.5 L112.0 456.5 L113.5 455.5 L115.0 453.5 L116.5 451.5 L118.0 450.5 L119.5 448.5 L121.0 446.5 L122.5 445.5 L124.0 443.5 L125.5 442.5 L127.0 440.5 L128.5 439.5 L130.0 437.5 L131.5 436.5 L133.0 435.5 L134.5 434.5 L136.0 433.5 L137.5 432.5 L139.0 431.5 L140.5 430.5 L142.0 430.5 L143.5 430.5 L145.0 430.5 L146.5 430.5 L148.0 430.5 L149.5 430.5 L151.0 430.5 L152.5 430.5 L154.0 430.5 L155.5 431.5 L157.0 432.5 L158.5 433.5 L160.0 434.5 L161.5 435.5 L163.0 436.5 L164.5 437.5 L166.0 439.5 L167.5 440.5 L169.0 442.5 L170.5 443.5 L172.0 445.5 L173.5 446.5 L175.0 448.5 L176.5 450.5 L178.0 451.5 L179.5 453.5 L181.0 455.5 L182.5 456.5 L184.0 458.5 L185.5 459.5 L187.0 461.5 L188.5 462.5 L190.0 463.5 L191.5 464.5 L193.0 465.5 L194.5 466.5 L196.0 467.5 L197.5 468.5 L199.0 468.5 L200.5 468.5 L202.0 468.5 L203.5 468.5 L205.0 468.5 L206.5 468.5 L208.0 468.5 L209.5 468.5 L211.0 468.5 L212.5 467.5 L214.0 466.5 L215.5 466.5 L217.0 465.5 L218.5 463.5 L220.0 462.5 L221.5 461.5 L223.0 460.5 L224.5 458.5 L226.0 457.5 L227.5 455.5 L229.0 453.5 L230.5 452.5 L232.0 450.5 L233.5 448.5 L235.0 447.5 L236.5 445.5 L238.0 444.5 L239.5 442.5 L241.0 440.5 L242.5 439.5 L244.0 438.5 L245.5 436.5 L247.0 435.5 L248.5 434.5 L250.0 433.5 L251.5 432.5 L253.0 431.5 L254.5 430.5 L256.0 430.5 L257.5 430.5 L259.0 430.5 L260.5 430.5 L262.0 430.5 L263.5 430.5 L265.0 430.5 L266.5 430.5 L268.0 430.5 L269.5 431.5 L271.0 431.5 L272.5 432.5 L274.0 433.5 L275.5 434.5 L277.0 436.5 L278.5 437.5 L280.0 438.5 L281.5 440.5 L283.0 441.5 L284.5 443.5 L286.0 444.5 L287.5 446.5 L289.0 448.5 L290.5 449.5 L292.0 451.5 L293.5 453.5 L295.0 454.5 L296.5 456.5 L298.0 457.5 L299.5 459.5 L301.0 460.5 L302.5 462.5 L304.0 463.5 L305.5 464.5 L307.0 465.5 L308.5 466.5 L310.0 467.5 L311.5 468.5 L313.0 468.5 L314.5 468.5 L316.0 468.5 L317.5 468.5 L319.0 468.5 L320.5 468.5 L322.0 468.5 L323.5 468.5 L325.0 468.5 L326.5 467.5 L328.0 467.5 L329.5 466.5 L331.0 465.5 L332.5 464.5 L334.0 463.5 L335.5 461.5 L337.0 460.5 L338.5 458.5 L340.0 457.5 L341.5 455.5 L343.0 454.5 L344.5 452.5 L346.0 450.5 L347.5 449.5 L349.0 447.5 L350.5 445.5 L352.0 444.5 L353.5 442.5 L355.0 441.5 L356.5 439.5 L358.0 438.5 L359.5 436.5 L361.0 435.5 L362.5 434.5 L364.0 433.5 L365.5 432.5 L367.0 431.5 L368.5 430.5 L370.0 430.5 L371.5 430.5 L373.0 430.5 L374.5 430.5 L376.0 430.5 L377.5 430.5 L379.0 430.5 L380.5 430.5 L382.0 430.5 L383.5 431.5 L385.0 431.5 L386.5 432.5 L388.0 433.5 L389.5 434.5 L391.0 435.5 L392.5 437.5 L394.0 438.5 L395.5 439.5 L397.0 441.5 L398.5 442.5 L400.0 444.5 L401.5 446.5 L403.0 447.5 L404.5 449.5 L406.0 451.5 L407.5 452.5 L409.0 454.5 L410.5 456.5 L412.0 457.5 L413.5 459.5 L415.0 460.5 L416.5 461.5 L418.0 463.5 L419.5 464.5 L421.0 465.5 L422.5 466.5 L424.0 467.5 L425.5 467.5 L427.0 468.5 L428.5 468.5 L430.0 468.5 L431.5 468.5 L433.0 468.5 L434.5 468.5 L436.0 468.5 L437.5 468.5 L439.0 468.5 L440.5 468.5 L442.0 467.5 L443.5 466.5 L445.0 465.5 L446.5 464.5 L448.0 463.5 L449.5 461.5 L451.0 460.5 L452.5 459.5 L454.0 457.5 L455.5 456.5 L457.0 454.5 L458.5 452.5 L460.0 451.5 L461.5 449.5 L463.0 447.5 L464.5 446.5 L466.0 444.5 L467.5 443.5 L469.0 441.5 L470.5 440.5 L472.0 438.5 L473.5 437.5 L475.0 435.5 L476.5 434.5 L478.0 433.5 L479.5 432.5 L481.0 431.5 L482.5 431.5 L484.0 430.5 L485.5 430.5 L487.0 430.5 L488.5 430.5 L490.0 430.5 L491.5 430.5 L493.0 430.5 L494.5 430.5 L496.0 430.5 L497.5 430.5 L499.0 431.5 L500.5 432.5 L502.0 433.5 L503.5 434.5 L505.0 435.5 L506.5 436.5 L508.0 438.5 L509.5 439.5 L511.0 441.5 L512.5 442.5 L514.0 444.5 L515.5 445.5 L517.0 447.5 L518.5 449.5 L520.0 450.5 L521.5 452.5 L523.0 454.5 L524.5 455.5 L526.0 457.5 L527.5 458.5 L529.0 460.5 L530.5 461.5 L532.0 462.5 L533.5 464.5 L535.0 465.5 L536.5 466.5 L538.0 467.5 L539.5 467.5 L541.0 468.5 L542.5 468.5 L544.0 468.5 L545.5 468.5 L547.0 468.5 L548.5 468.5 L550.0 468.5 L551.5 468.5 L553.0 468.5 L554.5 468.5 L556.0 467.5 L557.5 466.5 L559.0 465.5 L560.5 464.5 L562.0 463.5 L563.5 462.5 L565.0 460.5 L566.5 459.5 L568.0 458.5 L569.5 456.5 L571.0 454.5 L572.5 453.5 L574.0 451.5 L575.5 449.5 L577.0 448.5 L578.5 446.5 L580.0 445.5 L581.5 443.5 L583.0 441.5 L584.5 440.5 L586.0 438.5 L587.5 437.5 L589.0 436.5 L590.5 434.5 L592.0 433.5" fill="none" stroke="#40dc40" stroke-width="1.1"/>
</svg>
<!-- channel markers -->
<svg class="abs" style="left:7px;top:141.6px" width="16" height="12"><path d="M1.5 1.5H9.5L13.5 6L9.5 10.5H1.5Z" fill="#f0f020" stroke="#f0f020" stroke-width="1"/><text x="6.5" y="9.3" text-anchor="middle" font-family="Liberation Sans" font-weight="bold" font-size="8" fill="#202020">1</text></svg>
<svg class="abs" style="left:7px;top:240.2px" width="16" height="12"><path d="M1.5 1.5H9.5L13.5 6L9.5 10.5H1.5Z" fill="#20e0e0" stroke="#20e0e0" stroke-width="1"/><text x="6.5" y="9.3" text-anchor="middle" font-family="Liberation Sans" font-weight="bold" font-size="8" fill="#202020">2</text></svg>
<svg class="abs" style="left:7px;top:343px" width="16" height="12"><path d="M1.5 1.5H9.5L13.5 6L9.5 10.5H1.5Z" fill="#f020f0" stroke="#f020f0" stroke-width="1"/><text x="6.5" y="9.3" text-anchor="middle" font-family="Liberation Sans" font-weight="bold" font-size="8" fill="#202020">3</text></svg>
<svg class="abs" style="left:7px;top:441.8px" width="16" height="12"><path d="M1.5 1.5H9.5L13.5 6L9.5 10.5H1.5Z" fill="#20e020" stroke="#20e020" stroke-width="1"/><text x="6.5" y="9.3" text-anchor="middle" font-family="Liberation Sans" font-weight="bold" font-size="8" fill="#202020">4</text></svg>
<svg class="abs" style="left:592px;top:143px" width="16" height="12"><path d="M14 2.5H6L2.5 6L6 9.5H14Z" fill="#f0f020" stroke="#f0f020"/><path d="M6.5 3.8H11.5M9 3.8V9" stroke="#202020" stroke-width="1.6"/></svg>
<svg class="abs" style="left:302px;top:86px" width="10" height="12"><path d="M1 1.5H9V7.5L5 11L1 7.5Z" fill="#f09020" stroke="#c06010" stroke-width=".6"/><path d="M3 3.5H7M5 3.5V8.5" stroke="#502000" stroke-width="1.2"/></svg>
<!-- channel info boxes -->
<div class="cbox" style="left:21px;width:67px"></div>
<div class="abs" style="left:22px;top:509px;width:20px;height:12px;background:#f0f020"></div>
<div class="t" style="left:22px;top:511px;color:#000">CH1</div>
<div class="t" style="left:43px;top:511px;color:#d8d860">∿ 200mV</div>
<div class="cbox" style="left:100px;width:64px"></div>
<div class="t" style="left:102px;top:511px;color:#30c8d0">CH2∿ 100mV</div>
<div class="cbox" style="left:179px;width:64px"></div>
<div class="t" style="left:180px;top:511px;color:#c030d8">CH3∿ 200mV</div>
<div class="cbox" style="left:257px;width:65px"></div>
<div class="t" style="left:258px;top:511px;color:#30c030">CH4∿ &nbsp;5.00V</div>
<div class="cbox" style="left:527px;width:65px"></div>
<div class="t" style="left:529px;top:511px;color:#d88a30">Time: 500.0us</div>
<!-- right panel -->
<div class="abs" style="left:606px;top:65px;width:138px;height:459px;background:#f0f0f0;border-left:1px solid #fff"></div>
<div class="abs" style="left:607px;top:65px;width:137px;height:21px;border-top:1px solid #dcdcdc;border-bottom:1px solid #a8a8a8"></div>
<div class="t" style="left:627px;top:72px;font-size:9px">联机:</div>
<div class="abs" style="left:649px;top:69px;width:15px;height:15px;border-radius:50%;background:#ff8000;border:1px solid #c05a00"></div>
<div class="abs" style="left:608px;top:86px;width:1px;height:438px;background:#a0a0a0"></div>
<div class="abs" style="left:612px;top:95px;width:120px;height:79px;border:1px solid #e2e2e2;border-top:none"></div>
<div class="abs" style="left:637px;top:95px;width:95px;height:1px;background:#d8d8d8"></div>
<div class="t" style="left:618px;top:90px">水平</div>
<div class="t" style="left:614px;top:105px">秒 / 格</div>
<div class="combo" style="left:614px;top:118px;width:49px;height:16px"><span class="v" style="font-size:8px;top:4.0px">500.0us</span><i class="arr"></i></div>
<div class="t" style="left:614px;top:139px">格式</div>
<div class="combo" style="left:614px;top:153px;width:49px;height:16px"><span class="v" style="font-size:8px;top:4.0px">Y - T</span><i class="arr"></i></div>
<svg class="abs" style="left:666.7px;top:111px" width="60" height="60">
<defs><linearGradient id="kr141" x1="0" y1="0" x2="0" y2="1"><stop offset="0" stop-color="#c8c8c8"/><stop offset="1" stop-color="#8a8a8a"/></linearGradient></defs>
<circle cx="30" cy="30" r="26.6" fill="#e4e4e4" stroke="#6c6c6c" stroke-width="1.1"/>
<circle cx="30" cy="30" r="25.2" fill="url(#kr141)"/>
<circle cx="30" cy="30" r="23.4" fill="#c4c4c4"/>
<circle cx="30" cy="30" r="20.8" fill="#00008a"/>
<circle cx="30" cy="30" r="19.8" fill="#0000cc"/>
<path d="M33.6 14L31.2 24.7" stroke="#d8d8ff" stroke-width="1.3"/>
<path d="M7.3 53.1L12.3 49.6M52.7 53.1L47.7 49.6" stroke="#202020" stroke-width="1.2"/>
</svg>
<div class="abs" style="left:612px;top:184px;width:120px;height:105px;border:1px solid #e2e2e2;border-top:none"></div>
<div class="abs" style="left:637px;top:184px;width:95px;height:1px;background:#d8d8d8"></div>
<div class="t" style="left:618px;top:179px">垂直</div>
<div class="combo" style="left:614px;top:195px;width:49px;height:16px"><span class="v" style="font-size:8px;top:4.0px">CH1</span><i class="arr"></i></div>
<div class="abs" style="left:666px;top:196px;width:10px;height:10px;border:1px solid #8a8a8a;background:linear-gradient(#e8e8e8,#fafafa)"></div>
<svg class="abs" style="left:666px;top:196px" width="10" height="10"><path d="M2.5 5L4.3 7.5L7.8 2" fill="none" stroke="#2a3a8a" stroke-width="1.3"/></svg>
<div class="t" style="left:677px;top:197px">开/关</div>
<div class="abs" style="left:614px;top:215px;width:49px;height:15px;background:#f8f8f8;border:1px solid #d8d8d8"></div>
<div class="t" style="left:617px;top:218px">200mV</div>
<div class="abs" style="left:650px;top:216px;width:12px;height:13px;background:linear-gradient(#f0f0f0,#e0e0e0);border-left:1px solid #d0d0d0"></div>
<svg class="abs" style="left:650px;top:216px" width="12" height="13"><path d="M4 5L6 3L8 5ZM4 8L6 10L8 8Z" fill="#707070"/></svg>
<div class="combo" style="left:614px;top:235px;width:49px;height:16px"><span class="v" style="font-size:9px;top:3.0px">交流</span><i class="arr"></i></div>
<div class="combo" style="left:614px;top:255px;width:49px;height:16px"><span class="v" style="font-size:8px;top:4.0px">x1</span><i class="arr"></i></div>
<svg class="abs" style="left:667.5px;top:211px" width="60" height="60">
<defs><linearGradient id="kr241" x1="0" y1="0" x2="0" y2="1"><stop offset="0" stop-color="#c8c8c8"/><stop offset="1" stop-color="#8a8a8a"/></linearGradient></defs>
<circle cx="30" cy="30" r="26.6" fill="#e4e4e4" stroke="#6c6c6c" stroke-width="1.1"/>
<circle cx="30" cy="30" r="25.2" fill="url(#kr241)"/>
<circle cx="30" cy="30" r="23.4" fill="#c4c4c4"/>
<circle cx="30" cy="30" r="20.8" fill="#7a7a00"/>
<circle cx="30" cy="30" r="19.8" fill="#ffff00"/>
<path d="M28 15L27.3 22" stroke="#ffff90" stroke-width="1.2"/>
<path d="M7.3 53.1L12.3 49.6M52.7 53.1L47.7 49.6" stroke="#202020" stroke-width="1.2"/>
</svg>
<div class="abs" style="left:612px;top:300px;width:120px;height:170px;border:1px solid #e2e2e2;border-top:none"></div>
<div class="abs" style="left:637px;top:300px;width:95px;height:1px;background:#d8d8d8"></div>
<div class="t" style="left:617px;top:295px">触发</div>
<div class="t" style="left:614px;top:313px">触发模式</div>
<div class="combo" style="left:677px;top:310px;width:48px;height:16px"><span class="v" style="font-size:9px;top:3.0px">边沿</span><i class="arr"></i></div>
<div class="t" style="left:614px;top:334px">触发方式</div>
<div class="combo" style="left:677px;top:331px;width:48px;height:16px"><span class="v" style="font-size:9px;top:3.0px">自动</span><i class="arr"></i></div>
<div class="t" style="left:614px;top:356px">触发信源</div>
<div class="combo" style="left:677px;top:353px;width:48px;height:16px"><span class="v" style="font-size:8px;top:4.0px">CH1</span><i class="arr"></i></div>
<div class="t" style="left:614px;top:377px">边沿类型</div>
<div class="combo" style="left:677px;top:374px;width:48px;height:16px"><span class="v" style="font-size:8px;top:4.0px">+</span><i class="arr"></i></div>
<div class="abs" style="left:612px;top:498px;width:120px;height:26px;border:1px solid #e2e2e2;border-top:none;border-bottom:none"></div>
<div class="t" style="left:615px;top:493px;font-size:9px;color:#101010;-webkit-text-stroke:.2px #101010">波形移动</div>
<div class="t" style="left:610px;top:507px;color:#a0a0a0">数据长度</div>
<div class="abs" style="left:672px;top:503px;width:48px;height:14px;border:1px solid #fafafa;border-top-color:#a8a8a8;border-left-color:#b8b8b8;background:#f0f0f0"></div>
<div class="t" style="left:688px;top:506px;color:#b0b0b0;font-size:8px">4096</div>
<div class="abs" style="left:735px;top:86px;width:9px;height:438px;background:#f4f4f4;border-left:1px solid #e4e4e4"></div>
<svg class="abs" style="left:735px;top:88px" width="9" height="10"><path d="M2 6L4.5 3L7 6Z" fill="#404040"/></svg>
<div class="abs" style="left:735px;top:99px;width:9px;height:323px;background:linear-gradient(90deg,#fafafa,#f0f0f2 40%,#d4d4d6);border-left:1px solid #b4b4b4;border-top:1px solid #b4b4b4;border-bottom:1px solid #b4b4b4"></div>
<div class="abs" style="left:738px;top:257px;width:4px;height:6px;border-top:1px solid #808080;border-bottom:1px solid #808080"></div>
<div class="abs" style="left:738px;top:259px;width:4px;height:1px;background:#808080"></div>
<!-- status bar -->
<div class="abs" style="left:6px;top:524px;width:738px;height:15px;background:#f0f0f0;border-top:1px solid #d4d4d4"></div>
<div class="abs" style="left:6px;top:525px;width:738px;height:1px;background:#fff"></div>
<div class="t" style="left:7px;top:528px">已连接</div>
<div class="t" style="left:657px;top:529px;color:#222">22-02-2016</div>
<div class="t" style="left:709px;top:529px;color:#222">10:41</div>
<svg class="abs" style="left:734px;top:528px" width="10" height="11"><path d="M7.5 2h1v1h-1zM5.5 4h1v1h-1zM7.5 4h1v1h-1zM3.5 6h1v1h-1zM5.5 6h1v1h-1zM7.5 6h1v1h-1zM1.5 8h1v1h-1zM3.5 8h1v1h-1zM5.5 8h1v1h-1zM7.5 8h1v1h-1z" fill="#c4c4c4"/></svg>
</body></html>
